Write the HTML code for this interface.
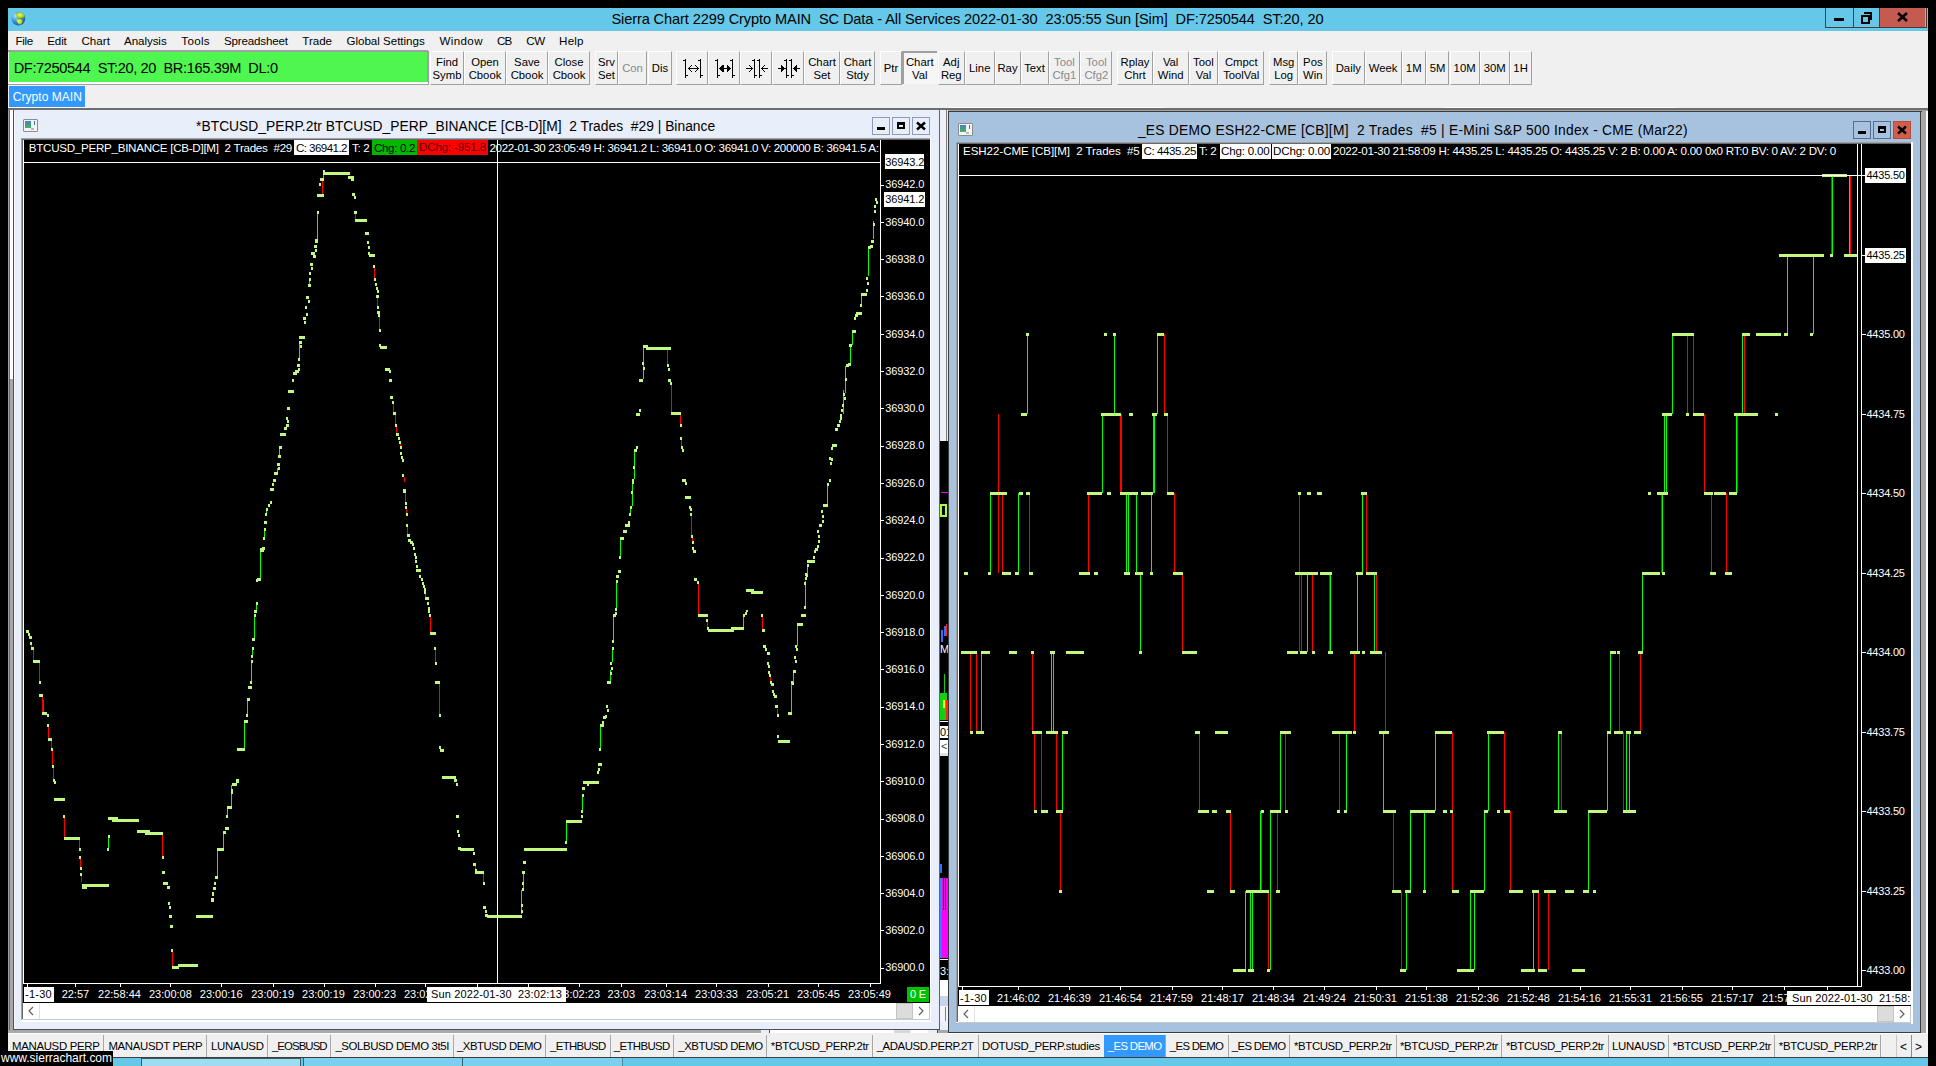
<!DOCTYPE html><html><head><meta charset="utf-8"><style>
html,body{margin:0;padding:0;background:#000;width:1936px;height:1066px;overflow:hidden;position:relative}
body>div,body>svg{position:absolute}
.t{white-space:pre;font-family:"Liberation Sans",sans-serif}
</style></head><body>
<div style="left:8px;top:8px;width:1920px;height:23px;background:#65C8E9;"></div>
<svg style="left:11px;top:11px" width="15" height="15" viewBox="0 0 15 15"><defs><radialGradient id="oc" cx="0.3" cy="0.3" r="0.8"><stop offset="0" stop-color="#a8e4ff"/><stop offset="0.5" stop-color="#3a8ee0"/><stop offset="1" stop-color="#1a4fa0"/></radialGradient><radialGradient id="gl" cx="0.45" cy="0.4" r="0.6"><stop offset="0" stop-color="#e4ff70"/><stop offset="0.7" stop-color="#a8d020"/><stop offset="1" stop-color="#6a9a10"/></radialGradient></defs><circle cx="7.4" cy="7.6" r="6.9" fill="url(#oc)"/><path d="M5.2 2.2 Q8 0.9 10.8 1.6 Q13.6 3.5 13.9 6.8 L12.2 7.6 Q10.2 6.6 8.6 7.2 Q6.4 6.8 5.6 5.4 Q4.6 3.8 5.2 2.2Z" fill="url(#gl)"/><path d="M4.9 8.2 Q8 7.4 11.2 8.4 Q12.4 10.2 11.2 12.2 Q9.6 14.2 8.1 13.8 Q6.9 11.6 5.6 10.4Z" fill="url(#gl)"/></svg>
<div class="t" style="left:611.40px;top:12.44px;font-size:14.6px;line-height:14.6px;color:#000;letter-spacing:-0.108px;">Sierra Chart 2299 Crypto MAIN  SC Data - All Services 2022-01-30  23:05:55 Sun [Sim]  DF:7250544  ST:20, 20</div>
<div style="left:1825px;top:8px;width:100px;height:19px;border:1px solid #4a3a3a;border-top:0"></div>
<div style="left:1853px;top:8px;width:1px;height:20px;background:#4a3a3a;"></div>
<div style="left:1879px;top:8px;width:46px;height:19px;background:#C45A50;"></div>
<div style="left:1879px;top:8px;width:1px;height:20px;background:#4a3a3a;"></div>
<div style="left:1834px;top:18px;width:10px;height:3px;background:#000;"></div>
<div style="left:1861px;top:15px;width:5px;height:5px;border:2px solid #000"></div>
<div style="left:1864px;top:12px;width:6px;height:6px;border-top:2px solid #000;border-right:2px solid #000"></div>
<svg style="left:1897px;top:12px" width="11" height="10" viewBox="0 0 11 10"><path d="M1 1 L10 9 M10 1 L1 9" stroke="#000" stroke-width="2.6"/></svg>
<div style="left:8px;top:31px;width:1920px;height:20px;background:#F0F0F0;"></div>
<div class="t" style="left:15.50px;top:34.98px;font-size:11.6px;line-height:11.6px;color:#000;letter-spacing:-0.322px;">File</div>
<div class="t" style="left:47.30px;top:34.98px;font-size:11.6px;line-height:11.6px;color:#000;letter-spacing:-0.171px;">Edit</div>
<div class="t" style="left:81.40px;top:34.98px;font-size:11.6px;line-height:11.6px;color:#000;letter-spacing:0.048px;">Chart</div>
<div class="t" style="left:124.00px;top:34.98px;font-size:11.6px;line-height:11.6px;color:#000;letter-spacing:-0.071px;">Analysis</div>
<div class="t" style="left:181.30px;top:34.98px;font-size:11.6px;line-height:11.6px;color:#000;letter-spacing:0.324px;">Tools</div>
<div class="t" style="left:223.90px;top:34.98px;font-size:11.6px;line-height:11.6px;color:#000;letter-spacing:-0.159px;">Spreadsheet</div>
<div class="t" style="left:302.30px;top:34.98px;font-size:11.6px;line-height:11.6px;color:#000;letter-spacing:-0.032px;">Trade</div>
<div class="t" style="left:346.50px;top:34.98px;font-size:11.6px;line-height:11.6px;color:#000;letter-spacing:-0.029px;">Global Settings</div>
<div class="t" style="left:439.50px;top:34.98px;font-size:11.6px;line-height:11.6px;color:#000;letter-spacing:0.358px;">Window</div>
<div class="t" style="left:497.10px;top:34.98px;font-size:11.6px;line-height:11.6px;color:#000;letter-spacing:-0.855px;">CB</div>
<div class="t" style="left:526.30px;top:34.98px;font-size:11.6px;line-height:11.6px;color:#000;letter-spacing:-0.414px;">CW</div>
<div class="t" style="left:559.10px;top:34.98px;font-size:11.6px;line-height:11.6px;color:#000;letter-spacing:0.160px;">Help</div>
<div style="left:8px;top:51px;width:1920px;height:57px;background:#F0F0F0;"></div>
<div style="left:8px;top:50px;width:420px;height:1px;background:#A0A0A0;"></div>
<div style="left:8px;top:51px;width:421px;height:1px;background:#A0A0A0;"></div>
<div style="left:9px;top:52px;width:418px;height:30px;background:#4FF64F;"></div>
<div style="left:427px;top:51px;width:2px;height:33px;background:#A0A0A0;"></div>
<div style="left:9px;top:82px;width:419px;height:2px;background:#FFFFFF;"></div>
<div class="t" style="left:13.70px;top:60.54px;font-size:14.6px;line-height:14.6px;color:#000;letter-spacing:-0.366px;">DF:7250544  ST:20, 20  BR:165.39M  DL:0</div>
<div style="left:430px;top:51px;width:34px;height:34px;border-left:1px solid #FFFFFF;border-right:1px solid #A0A0A0;border-bottom:1px solid #A0A0A0;border-top:1px solid #FFFFFF;box-sizing:border-box"></div>
<div class="t" style="left:436.01px;top:57.43px;font-size:11.3px;line-height:11.3px;color:#000;">Find</div>
<div class="t" style="left:432.55px;top:69.73px;font-size:11.3px;line-height:11.3px;color:#000;">Symb</div>
<div style="left:464px;top:51px;width:42px;height:34px;border-left:1px solid #FFFFFF;border-right:1px solid #A0A0A0;border-bottom:1px solid #A0A0A0;border-top:1px solid #FFFFFF;box-sizing:border-box"></div>
<div class="t" style="left:471.18px;top:57.43px;font-size:11.3px;line-height:11.3px;color:#000;">Open</div>
<div class="t" style="left:468.67px;top:69.73px;font-size:11.3px;line-height:11.3px;color:#000;">Cbook</div>
<div style="left:506px;top:51px;width:42px;height:34px;border-left:1px solid #FFFFFF;border-right:1px solid #A0A0A0;border-bottom:1px solid #A0A0A0;border-top:1px solid #FFFFFF;box-sizing:border-box"></div>
<div class="t" style="left:514.12px;top:57.43px;font-size:11.3px;line-height:11.3px;color:#000;">Save</div>
<div class="t" style="left:510.67px;top:69.73px;font-size:11.3px;line-height:11.3px;color:#000;">Cbook</div>
<div style="left:548px;top:51px;width:42px;height:34px;border-left:1px solid #FFFFFF;border-right:1px solid #A0A0A0;border-bottom:1px solid #A0A0A0;border-top:1px solid #FFFFFF;box-sizing:border-box"></div>
<div class="t" style="left:554.55px;top:57.43px;font-size:11.3px;line-height:11.3px;color:#000;">Close</div>
<div class="t" style="left:552.67px;top:69.73px;font-size:11.3px;line-height:11.3px;color:#000;">Cbook</div>
<div style="left:595px;top:51px;width:23px;height:34px;border-left:1px solid #FFFFFF;border-right:1px solid #A0A0A0;border-bottom:1px solid #A0A0A0;border-top:1px solid #FFFFFF;box-sizing:border-box"></div>
<div class="t" style="left:598.02px;top:57.43px;font-size:11.3px;line-height:11.3px;color:#000;">Srv</div>
<div class="t" style="left:598.02px;top:69.73px;font-size:11.3px;line-height:11.3px;color:#000;">Set</div>
<div style="left:618px;top:51px;width:29px;height:34px;border-left:1px solid #FFFFFF;border-right:1px solid #A0A0A0;border-bottom:1px solid #A0A0A0;border-top:1px solid #FFFFFF;box-sizing:border-box"></div>
<div class="t" style="left:622.13px;top:63.43px;font-size:11.3px;line-height:11.3px;color:#8a8a8a;">Con</div>
<div style="left:648px;top:51px;width:24px;height:34px;border-left:1px solid #FFFFFF;border-right:1px solid #A0A0A0;border-bottom:1px solid #A0A0A0;border-top:1px solid #FFFFFF;box-sizing:border-box"></div>
<div class="t" style="left:651.84px;top:63.43px;font-size:11.3px;line-height:11.3px;color:#000;">Dis</div>
<div style="left:676px;top:51px;width:32px;height:34px;border-left:1px solid #FFFFFF;border-right:1px solid #A0A0A0;border-bottom:1px solid #A0A0A0;border-top:1px solid #FFFFFF;box-sizing:border-box"></div>
<div style="left:708px;top:51px;width:32px;height:34px;border-left:1px solid #FFFFFF;border-right:1px solid #A0A0A0;border-bottom:1px solid #A0A0A0;border-top:1px solid #FFFFFF;box-sizing:border-box"></div>
<div style="left:740px;top:51px;width:32px;height:34px;border-left:1px solid #FFFFFF;border-right:1px solid #A0A0A0;border-bottom:1px solid #A0A0A0;border-top:1px solid #FFFFFF;box-sizing:border-box"></div>
<div style="left:772px;top:51px;width:32px;height:34px;border-left:1px solid #FFFFFF;border-right:1px solid #A0A0A0;border-bottom:1px solid #A0A0A0;border-top:1px solid #FFFFFF;box-sizing:border-box"></div>
<div style="left:804px;top:51px;width:36px;height:34px;border-left:1px solid #FFFFFF;border-right:1px solid #A0A0A0;border-bottom:1px solid #A0A0A0;border-top:1px solid #FFFFFF;box-sizing:border-box"></div>
<div class="t" style="left:808.19px;top:57.43px;font-size:11.3px;line-height:11.3px;color:#000;">Chart</div>
<div class="t" style="left:813.52px;top:69.73px;font-size:11.3px;line-height:11.3px;color:#000;">Set</div>
<div style="left:840px;top:51px;width:35px;height:34px;border-left:1px solid #FFFFFF;border-right:1px solid #A0A0A0;border-bottom:1px solid #A0A0A0;border-top:1px solid #FFFFFF;box-sizing:border-box"></div>
<div class="t" style="left:843.69px;top:57.43px;font-size:11.3px;line-height:11.3px;color:#000;">Chart</div>
<div class="t" style="left:846.20px;top:69.73px;font-size:11.3px;line-height:11.3px;color:#000;">Stdy</div>
<div style="left:880px;top:51px;width:22px;height:34px;border-left:1px solid #FFFFFF;border-right:1px solid #A0A0A0;border-bottom:1px solid #A0A0A0;border-top:1px solid #FFFFFF;box-sizing:border-box"></div>
<div class="t" style="left:883.78px;top:63.43px;font-size:11.3px;line-height:11.3px;color:#000;">Ptr</div>
<div style="left:902px;top:51px;width:34.5px;height:33px;background:#F6F6F6;border-left:2px solid #A0A0A0;border-top:2px solid #A0A0A0;box-sizing:border-box"></div>
<div class="t" style="left:905.94px;top:57.43px;font-size:11.3px;line-height:11.3px;color:#000;">Chart</div>
<div class="t" style="left:912.00px;top:69.73px;font-size:11.3px;line-height:11.3px;color:#000;">Val</div>
<div style="left:937.5px;top:51px;width:27.5px;height:34px;border-left:1px solid #FFFFFF;border-right:1px solid #A0A0A0;border-bottom:1px solid #A0A0A0;border-top:1px solid #FFFFFF;box-sizing:border-box"></div>
<div class="t" style="left:943.09px;top:57.43px;font-size:11.3px;line-height:11.3px;color:#000;">Adj</div>
<div class="t" style="left:940.88px;top:69.73px;font-size:11.3px;line-height:11.3px;color:#000;">Reg</div>
<div style="left:965px;top:51px;width:29.5px;height:34px;border-left:1px solid #FFFFFF;border-right:1px solid #A0A0A0;border-bottom:1px solid #A0A0A0;border-top:1px solid #FFFFFF;box-sizing:border-box"></div>
<div class="t" style="left:969.07px;top:63.43px;font-size:11.3px;line-height:11.3px;color:#000;">Line</div>
<div style="left:994.5px;top:51px;width:26.0px;height:34px;border-left:1px solid #FFFFFF;border-right:1px solid #A0A0A0;border-bottom:1px solid #A0A0A0;border-top:1px solid #FFFFFF;box-sizing:border-box"></div>
<div class="t" style="left:997.45px;top:63.43px;font-size:11.3px;line-height:11.3px;color:#000;">Ray</div>
<div style="left:1020.5px;top:51px;width:28.0px;height:34px;border-left:1px solid #FFFFFF;border-right:1px solid #A0A0A0;border-bottom:1px solid #A0A0A0;border-top:1px solid #FFFFFF;box-sizing:border-box"></div>
<div class="t" style="left:1024.14px;top:63.43px;font-size:11.3px;line-height:11.3px;color:#000;">Text</div>
<div style="left:1048.5px;top:51px;width:31.799999999999955px;height:34px;border-left:1px solid #FFFFFF;border-right:1px solid #A0A0A0;border-bottom:1px solid #A0A0A0;border-top:1px solid #FFFFFF;box-sizing:border-box"></div>
<div class="t" style="left:1054.03px;top:57.43px;font-size:11.3px;line-height:11.3px;color:#8a8a8a;">Tool</div>
<div class="t" style="left:1052.46px;top:69.73px;font-size:11.3px;line-height:11.3px;color:#8a8a8a;">Cfg1</div>
<div style="left:1080.3px;top:51px;width:32.100000000000136px;height:34px;border-left:1px solid #FFFFFF;border-right:1px solid #A0A0A0;border-bottom:1px solid #A0A0A0;border-top:1px solid #FFFFFF;box-sizing:border-box"></div>
<div class="t" style="left:1085.98px;top:57.43px;font-size:11.3px;line-height:11.3px;color:#8a8a8a;">Tool</div>
<div class="t" style="left:1084.41px;top:69.73px;font-size:11.3px;line-height:11.3px;color:#8a8a8a;">Cfg2</div>
<div style="left:1117.3px;top:51px;width:35.40000000000009px;height:34px;border-left:1px solid #FFFFFF;border-right:1px solid #A0A0A0;border-bottom:1px solid #A0A0A0;border-top:1px solid #FFFFFF;box-sizing:border-box"></div>
<div class="t" style="left:1120.55px;top:57.43px;font-size:11.3px;line-height:11.3px;color:#000;">Rplay</div>
<div class="t" style="left:1124.33px;top:69.73px;font-size:11.3px;line-height:11.3px;color:#000;">Chrt</div>
<div style="left:1152.7px;top:51px;width:35.899999999999864px;height:34px;border-left:1px solid #FFFFFF;border-right:1px solid #A0A0A0;border-bottom:1px solid #A0A0A0;border-top:1px solid #FFFFFF;box-sizing:border-box"></div>
<div class="t" style="left:1162.90px;top:57.43px;font-size:11.3px;line-height:11.3px;color:#000;">Val</div>
<div class="t" style="left:1157.78px;top:69.73px;font-size:11.3px;line-height:11.3px;color:#000;">Wind</div>
<div style="left:1188.6px;top:51px;width:29.700000000000045px;height:34px;border-left:1px solid #FFFFFF;border-right:1px solid #A0A0A0;border-bottom:1px solid #A0A0A0;border-top:1px solid #FFFFFF;box-sizing:border-box"></div>
<div class="t" style="left:1193.08px;top:57.43px;font-size:11.3px;line-height:11.3px;color:#000;">Tool</div>
<div class="t" style="left:1195.70px;top:69.73px;font-size:11.3px;line-height:11.3px;color:#000;">Val</div>
<div style="left:1218.3px;top:51px;width:45.90000000000009px;height:34px;border-left:1px solid #FFFFFF;border-right:1px solid #A0A0A0;border-bottom:1px solid #A0A0A0;border-top:1px solid #FFFFFF;box-sizing:border-box"></div>
<div class="t" style="left:1224.93px;top:57.43px;font-size:11.3px;line-height:11.3px;color:#000;">Cmpct</div>
<div class="t" style="left:1223.14px;top:69.73px;font-size:11.3px;line-height:11.3px;color:#000;">ToolVal</div>
<div style="left:1269.1px;top:51px;width:29.200000000000045px;height:34px;border-left:1px solid #FFFFFF;border-right:1px solid #A0A0A0;border-bottom:1px solid #A0A0A0;border-top:1px solid #FFFFFF;box-sizing:border-box"></div>
<div class="t" style="left:1273.03px;top:57.43px;font-size:11.3px;line-height:11.3px;color:#000;">Msg</div>
<div class="t" style="left:1274.27px;top:69.73px;font-size:11.3px;line-height:11.3px;color:#000;">Log</div>
<div style="left:1298.3px;top:51px;width:29.100000000000136px;height:34px;border-left:1px solid #FFFFFF;border-right:1px solid #A0A0A0;border-bottom:1px solid #A0A0A0;border-top:1px solid #FFFFFF;box-sizing:border-box"></div>
<div class="t" style="left:1303.12px;top:57.43px;font-size:11.3px;line-height:11.3px;color:#000;">Pos</div>
<div class="t" style="left:1303.12px;top:69.73px;font-size:11.3px;line-height:11.3px;color:#000;">Win</div>
<div style="left:1332px;top:51px;width:32.5px;height:34px;border-left:1px solid #FFFFFF;border-right:1px solid #A0A0A0;border-bottom:1px solid #A0A0A0;border-top:1px solid #FFFFFF;box-sizing:border-box"></div>
<div class="t" style="left:1335.70px;top:63.43px;font-size:11.3px;line-height:11.3px;color:#000;">Daily</div>
<div style="left:1364.5px;top:51px;width:37.299999999999955px;height:34px;border-left:1px solid #FFFFFF;border-right:1px solid #A0A0A0;border-bottom:1px solid #A0A0A0;border-top:1px solid #FFFFFF;box-sizing:border-box"></div>
<div class="t" style="left:1368.81px;top:63.43px;font-size:11.3px;line-height:11.3px;color:#000;">Week</div>
<div style="left:1401.8px;top:51px;width:23.799999999999955px;height:34px;border-left:1px solid #FFFFFF;border-right:1px solid #A0A0A0;border-bottom:1px solid #A0A0A0;border-top:1px solid #FFFFFF;box-sizing:border-box"></div>
<div class="t" style="left:1405.85px;top:63.43px;font-size:11.3px;line-height:11.3px;color:#000;">1M</div>
<div style="left:1425.6px;top:51px;width:23.90000000000009px;height:34px;border-left:1px solid #FFFFFF;border-right:1px solid #A0A0A0;border-bottom:1px solid #A0A0A0;border-top:1px solid #FFFFFF;box-sizing:border-box"></div>
<div class="t" style="left:1429.70px;top:63.43px;font-size:11.3px;line-height:11.3px;color:#000;">5M</div>
<div style="left:1449.5px;top:51px;width:30.200000000000045px;height:34px;border-left:1px solid #FFFFFF;border-right:1px solid #A0A0A0;border-bottom:1px solid #A0A0A0;border-top:1px solid #FFFFFF;box-sizing:border-box"></div>
<div class="t" style="left:1453.61px;top:63.43px;font-size:11.3px;line-height:11.3px;color:#000;">10M</div>
<div style="left:1479.7px;top:51px;width:29.899999999999864px;height:34px;border-left:1px solid #FFFFFF;border-right:1px solid #A0A0A0;border-bottom:1px solid #A0A0A0;border-top:1px solid #FFFFFF;box-sizing:border-box"></div>
<div class="t" style="left:1483.66px;top:63.43px;font-size:11.3px;line-height:11.3px;color:#000;">30M</div>
<div style="left:1509.6px;top:51px;width:22.0px;height:34px;border-left:1px solid #FFFFFF;border-right:1px solid #A0A0A0;border-bottom:1px solid #A0A0A0;border-top:1px solid #FFFFFF;box-sizing:border-box"></div>
<div class="t" style="left:1513.37px;top:63.43px;font-size:11.3px;line-height:11.3px;color:#000;">1H</div>
<svg style="left:670px;top:55px" width="140" height="26" viewBox="670 55 140 26" shape-rendering="crispEdges"><g fill="#000"><rect x="685" y="59" width="1" height="19"/><rect x="683" y="60" width="2" height="1"/><rect x="686" y="75" width="2" height="1"/><rect x="700" y="59" width="1" height="19"/><rect x="698" y="60" width="2" height="1"/><rect x="701" y="75" width="2" height="1"/><rect x="688" y="68" width="11" height="1"/><rect x="689" y="67" width="1" height="1"/><rect x="689" y="69" width="1" height="1"/><rect x="690" y="66" width="1" height="1"/><rect x="690" y="70" width="1" height="1"/><rect x="691" y="65" width="1" height="1"/><rect x="691" y="71" width="1" height="1"/><rect x="697" y="67" width="1" height="1"/><rect x="697" y="69" width="1" height="1"/><rect x="696" y="66" width="1" height="1"/><rect x="696" y="70" width="1" height="1"/><rect x="695" y="65" width="1" height="1"/><rect x="695" y="71" width="1" height="1"/><rect x="717" y="59" width="1" height="19"/><rect x="715" y="60" width="2" height="1"/><rect x="718" y="75" width="2" height="1"/><rect x="732" y="59" width="1" height="19"/><rect x="730" y="60" width="2" height="1"/><rect x="733" y="75" width="2" height="1"/><rect x="723" y="68" width="4" height="1"/><polygon points="719,68.5 723.5,64.5 723.5,72.5"/><polygon points="731,68.5 726.5,64.5 726.5,72.5"/><rect x="754" y="59" width="1" height="19"/><rect x="752" y="60" width="2" height="1"/><rect x="755" y="75" width="2" height="1"/><rect x="759" y="59" width="1" height="19"/><rect x="757" y="60" width="2" height="1"/><rect x="760" y="75" width="2" height="1"/><rect x="746" y="68" width="7" height="1"/><rect x="751" y="67" width="1" height="1"/><rect x="751" y="69" width="1" height="1"/><rect x="750" y="66" width="1" height="1"/><rect x="750" y="70" width="1" height="1"/><rect x="749" y="65" width="1" height="1"/><rect x="749" y="71" width="1" height="1"/><rect x="761" y="68" width="7" height="1"/><rect x="762" y="67" width="1" height="1"/><rect x="762" y="69" width="1" height="1"/><rect x="763" y="66" width="1" height="1"/><rect x="763" y="70" width="1" height="1"/><rect x="764" y="65" width="1" height="1"/><rect x="764" y="71" width="1" height="1"/><rect x="786" y="59" width="1" height="19"/><rect x="784" y="60" width="2" height="1"/><rect x="787" y="75" width="2" height="1"/><rect x="791" y="59" width="1" height="19"/><rect x="789" y="60" width="2" height="1"/><rect x="792" y="75" width="2" height="1"/><rect x="778" y="68" width="4" height="1"/><polygon points="785.5,68.5 781,64.5 781,72.5"/><polygon points="792.5,68.5 797,64.5 797,72.5"/><rect x="797" y="68" width="3" height="1"/></g></svg>
<div style="left:8px;top:84px;width:421px;height:1px;background:#A0A0A0;"></div>
<div style="left:9px;top:86px;width:76px;height:21px;background:#3399FF;"></div>
<div class="t" style="left:12.70px;top:90.64px;font-size:12px;line-height:12px;color:#FFFFFF;letter-spacing:0.056px;">Crypto MAIN</div>
<div style="left:8px;top:107px;width:1920px;height:1px;background:#F0F0F0;"></div>
<div style="left:8px;top:107px;width:78px;height:1px;background:#FFFFFF;"></div>
<div style="left:949px;top:107px;width:216px;height:1px;background:#FFFFFF;"></div>
<div style="left:1443px;top:107px;width:234px;height:1px;background:#FFFFFF;"></div>
<div style="left:8px;top:108px;width:1920px;height:2px;background:#6E6E6E;"></div>
<div style="left:8px;top:110px;width:1920px;height:923px;background:#F0F0F0;"></div>
<div style="left:8px;top:110px;width:1px;height:923px;background:#A0A0A0;"></div>
<div style="left:9px;top:110px;width:1px;height:923px;background:#6A6A6A;"></div>
<div style="left:10px;top:110px;width:3px;height:269px;background:#FFFFFF;"></div>
<div style="left:10px;top:379px;width:3px;height:654px;background:#A8A8A8;"></div>
<div style="left:1921px;top:110px;width:5px;height:923px;background:#A8A8A8;"></div>
<div style="left:1926px;top:110px;width:2px;height:923px;background:#FFFFFF;"></div>
<div style="left:13px;top:110px;width:927px;height:920px;background:#E9EEFB;"></div>
<div style="left:13px;top:110px;width:1px;height:920px;background:#505050;"></div>
<div style="left:14px;top:111px;width:1px;height:918px;background:#F6F9FF;"></div>
<div style="left:939px;top:110px;width:1px;height:920px;background:#646464;"></div>
<div style="left:13px;top:1029px;width:927px;height:1px;background:#505050;"></div>
<div style="left:23px;top:119px;width:13px;height:11px;background:#F4F4F4;border:1px solid #8C8C8C;border-radius:1px"></div>
<div style="left:25px;top:121px;width:6px;height:7px;background:linear-gradient(#4a80c0,#48b060)"></div>
<div style="left:34px;top:121px;width:1px;height:4px;background:#2a7ad0;"></div>
<div style="left:31px;top:128px;width:3px;height:2px;background:#b8b8b8;"></div>
<div class="t" style="left:196.10px;top:119.82px;font-size:13.8px;line-height:13.8px;color:#000;letter-spacing:0.017px;">*BTCUSD_PERP.2tr BTCUSD_PERP_BINANCE [CB-D][M]  2 Trades  #29 | Binance</div>
<div style="left:872px;top:117px;width:18px;height:18px;background:#E9EEFB;border:1px solid #8C9BB8;box-sizing:border-box"></div>
<div style="left:877px;top:127px;width:8px;height:3px;background:#000;"></div>
<div style="left:892px;top:117px;width:18px;height:18px;background:#E9EEFB;border:1px solid #8C9BB8;box-sizing:border-box"></div>
<div style="left:897px;top:122px;width:8px;height:7px;border:2px solid #000;border-top-width:3px;box-sizing:border-box"></div>
<div style="left:912px;top:117px;width:18px;height:18px;background:#E9EEFB;border:1px solid #8C9BB8;box-sizing:border-box"></div>
<svg style="left:916px;top:121px" width="10" height="10" viewBox="0 0 10 10"><path d="M1 1.5 L9 8.5 M9 1.5 L1 8.5" stroke="#000" stroke-width="2.4"/></svg>
<div style="left:21px;top:138px;width:910px;height:1px;background:#A0A0A0;"></div>
<div style="left:21px;top:138px;width:1px;height:882px;background:#A0A0A0;"></div>
<div style="left:22px;top:139px;width:909px;height:1px;background:#696969;"></div>
<div style="left:22px;top:139px;width:1px;height:880px;background:#696969;"></div>
<div style="left:23px;top:140px;width:907px;height:863px;background:#000;"></div>
<div style="left:930px;top:138px;width:1px;height:884px;background:#FFFFFF;"></div>
<div style="left:21px;top:1020px;width:910px;height:2px;background:#FFFFFF;"></div>
<div style="left:940px;top:110px;width:988px;height:1px;background:#A0A0A0;"></div>
<div style="left:948px;top:111px;width:973px;height:922px;background:#A7C2DF;"></div>
<div style="left:948px;top:111px;width:974px;height:1px;background:#3C3C3C;"></div>
<div style="left:948px;top:111px;width:1px;height:922px;background:#3C3C3C;"></div>
<div style="left:1920px;top:111px;width:1px;height:922px;background:#3C3C3C;"></div>
<div style="left:948px;top:1032px;width:973px;height:1px;background:#3C3C3C;"></div>
<div style="left:958px;top:123px;width:13px;height:11px;background:#F4F4F4;border:1px solid #8C8C8C;border-radius:1px"></div>
<div style="left:960px;top:125px;width:6px;height:7px;background:linear-gradient(#4a80c0,#48b060)"></div>
<div style="left:969px;top:125px;width:1px;height:4px;background:#2a7ad0;"></div>
<div style="left:966px;top:132px;width:3px;height:2px;background:#b8b8b8;"></div>
<div class="t" style="left:1137.90px;top:124.12px;font-size:13.8px;line-height:13.8px;color:#000;letter-spacing:0.268px;">_ES DEMO ESH22-CME [CB][M]  2 Trades  #5 | E-Mini S&amp;P 500 Index - CME (Mar22)</div>
<div style="left:1853px;top:121px;width:18px;height:18px;background:#A7C2DF;border:1px solid #5C6C88;box-sizing:border-box"></div>
<div style="left:1858px;top:131px;width:8px;height:3px;background:#000;"></div>
<div style="left:1873px;top:121px;width:18px;height:18px;background:#A7C2DF;border:1px solid #5C6C88;box-sizing:border-box"></div>
<div style="left:1878px;top:126px;width:8px;height:7px;border:2px solid #000;border-top-width:3px;box-sizing:border-box"></div>
<div style="left:1893px;top:121px;width:18px;height:18px;background:#D0604C;border:1px solid #B84A38;box-sizing:border-box"></div>
<svg style="left:1897px;top:125px" width="10" height="10" viewBox="0 0 10 10"><path d="M1 1.5 L9 8.5 M9 1.5 L1 8.5" stroke="#000" stroke-width="2.4"/></svg>
<div style="left:956px;top:142px;width:957px;height:1px;background:#A0A0A0;"></div>
<div style="left:956px;top:142px;width:1px;height:882px;background:#A0A0A0;"></div>
<div style="left:957px;top:143px;width:956px;height:1px;background:#696969;"></div>
<div style="left:957px;top:143px;width:1px;height:880px;background:#696969;"></div>
<div style="left:958px;top:144px;width:953px;height:862px;background:#000;"></div>
<div style="left:1911px;top:142px;width:2px;height:882px;background:#FFFFFF;"></div>
<div style="left:956px;top:1022px;width:957px;height:1px;background:#FFFFFF;"></div>
<div style="left:940px;top:110px;width:8px;height:920px;background:#E9EEFB;"></div>
<div style="left:8px;top:1030px;width:940px;height:28px;background:#F0F0F0;"></div>
<div style="left:948px;top:1033px;width:980px;height:25px;background:#F0F0F0;"></div>
<div style="left:8px;top:1030px;width:753px;height:3px;background:#A8A8A8;"></div>
<div style="left:761px;top:1030px;width:8px;height:3px;background:#E9EEFB;"></div>
<div style="left:769px;top:1030px;width:1px;height:3px;background:#505050;"></div>
<div style="left:770px;top:1030px;width:124px;height:3px;background:#FFFFFF;"></div>
<div style="left:894px;top:1030px;width:16px;height:3px;background:#D8D8D8;"></div>
<div style="left:911px;top:1030px;width:17px;height:3px;background:#FFFFFF;"></div>
<div style="left:928px;top:1030px;width:9px;height:3px;background:#E9EEFB;"></div>
<div style="left:937px;top:1030px;width:1px;height:3px;background:#505050;"></div>
<div style="left:938px;top:1030px;width:10px;height:3px;background:#A8A8A8;"></div>
<div style="left:8px;top:1057px;width:1920px;height:1px;background:#3C3C3C;"></div>
<div style="left:0px;top:1058px;width:1928px;height:8px;background:#65C8E9;"></div>
<div class="t" style="left:28.80px;top:141.78px;font-size:11.6px;line-height:11.6px;color:#FFFFFF;letter-spacing:-0.271px;">BTCUSD_PERP_BINANCE [CB-D][M]  2 Trades  #29</div>
<div style="left:294px;top:140px;width:55px;height:15px;background:#FFFFFF;"></div>
<div class="t" style="left:296.00px;top:141.78px;font-size:11.6px;line-height:11.6px;color:#000;letter-spacing:-0.573px;">C: 36941.2</div>
<div class="t" style="left:352.00px;top:141.78px;font-size:11.6px;line-height:11.6px;color:#FFFFFF;letter-spacing:-0.347px;">T: 2</div>
<div style="left:372px;top:140px;width:45px;height:15px;background:#00B800;"></div>
<div class="t" style="left:374.00px;top:141.78px;font-size:11.6px;line-height:11.6px;color:#000;letter-spacing:-0.354px;">Chg: 0.2</div>
<div style="left:417px;top:140px;width:71px;height:15px;background:#FF0000;"></div>
<div class="t" style="left:419.00px;top:141.48px;font-size:11.6px;line-height:11.6px;color:#5A0000;letter-spacing:-0.164px;">DChg: -951.8</div>
<div class="t" style="left:489.50px;top:141.78px;font-size:11.6px;line-height:11.6px;color:#FFFFFF;letter-spacing:-0.338px;">2022-01-30 23:05:49 H: 36941.2 L: 36941.0 O: 36941.0 V: 200000 B: 36941.5 A:</div>
<div style="left:879px;top:140px;width:51px;height:7px;background:#000;"></div>
<div style="left:24px;top:162px;width:856px;height:1px;background:#FFFFFF;"></div>
<div style="left:880px;top:140px;width:1px;height:844px;background:#FFFFFF;"></div>
<div style="left:23px;top:983px;width:858px;height:1px;background:#FFFFFF;"></div>
<div style="left:23px;top:140px;width:1px;height:844px;background:#FFFFFF;"></div>
<div style="left:497px;top:140px;width:1px;height:844px;background:#FFFFFF;"></div>
<div style="left:880px;top:185px;width:4px;height:1px;background:#FFFFFF;"></div>
<div class="t" style="left:885.20px;top:179.39px;font-size:11px;line-height:11px;color:#FFFFFF;letter-spacing:-0.109px;">36942.0</div>
<div style="left:880px;top:222px;width:4px;height:1px;background:#FFFFFF;"></div>
<div class="t" style="left:885.20px;top:216.68px;font-size:11px;line-height:11px;color:#FFFFFF;letter-spacing:-0.109px;">36940.0</div>
<div style="left:880px;top:259px;width:4px;height:1px;background:#FFFFFF;"></div>
<div class="t" style="left:885.20px;top:253.97px;font-size:11px;line-height:11px;color:#FFFFFF;letter-spacing:-0.109px;">36938.0</div>
<div style="left:880px;top:296px;width:4px;height:1px;background:#FFFFFF;"></div>
<div class="t" style="left:885.20px;top:291.26px;font-size:11px;line-height:11px;color:#FFFFFF;letter-spacing:-0.109px;">36936.0</div>
<div style="left:880px;top:334px;width:4px;height:1px;background:#FFFFFF;"></div>
<div class="t" style="left:885.20px;top:328.55px;font-size:11px;line-height:11px;color:#FFFFFF;letter-spacing:-0.109px;">36934.0</div>
<div style="left:880px;top:371px;width:4px;height:1px;background:#FFFFFF;"></div>
<div class="t" style="left:885.20px;top:365.84px;font-size:11px;line-height:11px;color:#FFFFFF;letter-spacing:-0.109px;">36932.0</div>
<div style="left:880px;top:408px;width:4px;height:1px;background:#FFFFFF;"></div>
<div class="t" style="left:885.20px;top:403.13px;font-size:11px;line-height:11px;color:#FFFFFF;letter-spacing:-0.109px;">36930.0</div>
<div style="left:880px;top:446px;width:4px;height:1px;background:#FFFFFF;"></div>
<div class="t" style="left:885.20px;top:440.42px;font-size:11px;line-height:11px;color:#FFFFFF;letter-spacing:-0.109px;">36928.0</div>
<div style="left:880px;top:483px;width:4px;height:1px;background:#FFFFFF;"></div>
<div class="t" style="left:885.20px;top:477.71px;font-size:11px;line-height:11px;color:#FFFFFF;letter-spacing:-0.109px;">36926.0</div>
<div style="left:880px;top:520px;width:4px;height:1px;background:#FFFFFF;"></div>
<div class="t" style="left:885.20px;top:515.00px;font-size:11px;line-height:11px;color:#FFFFFF;letter-spacing:-0.109px;">36924.0</div>
<div style="left:880px;top:558px;width:4px;height:1px;background:#FFFFFF;"></div>
<div class="t" style="left:885.20px;top:552.29px;font-size:11px;line-height:11px;color:#FFFFFF;letter-spacing:-0.109px;">36922.0</div>
<div style="left:880px;top:595px;width:4px;height:1px;background:#FFFFFF;"></div>
<div class="t" style="left:885.20px;top:589.58px;font-size:11px;line-height:11px;color:#FFFFFF;letter-spacing:-0.109px;">36920.0</div>
<div style="left:880px;top:632px;width:4px;height:1px;background:#FFFFFF;"></div>
<div class="t" style="left:885.20px;top:626.87px;font-size:11px;line-height:11px;color:#FFFFFF;letter-spacing:-0.109px;">36918.0</div>
<div style="left:880px;top:669px;width:4px;height:1px;background:#FFFFFF;"></div>
<div class="t" style="left:885.20px;top:664.16px;font-size:11px;line-height:11px;color:#FFFFFF;letter-spacing:-0.109px;">36916.0</div>
<div style="left:880px;top:707px;width:4px;height:1px;background:#FFFFFF;"></div>
<div class="t" style="left:885.20px;top:701.45px;font-size:11px;line-height:11px;color:#FFFFFF;letter-spacing:-0.109px;">36914.0</div>
<div style="left:880px;top:744px;width:4px;height:1px;background:#FFFFFF;"></div>
<div class="t" style="left:885.20px;top:738.74px;font-size:11px;line-height:11px;color:#FFFFFF;letter-spacing:-0.109px;">36912.0</div>
<div style="left:880px;top:781px;width:4px;height:1px;background:#FFFFFF;"></div>
<div class="t" style="left:885.20px;top:776.03px;font-size:11px;line-height:11px;color:#FFFFFF;letter-spacing:-0.109px;">36910.0</div>
<div style="left:880px;top:819px;width:4px;height:1px;background:#FFFFFF;"></div>
<div class="t" style="left:885.20px;top:813.32px;font-size:11px;line-height:11px;color:#FFFFFF;letter-spacing:-0.109px;">36908.0</div>
<div style="left:880px;top:856px;width:4px;height:1px;background:#FFFFFF;"></div>
<div class="t" style="left:885.20px;top:850.61px;font-size:11px;line-height:11px;color:#FFFFFF;letter-spacing:-0.109px;">36906.0</div>
<div style="left:880px;top:893px;width:4px;height:1px;background:#FFFFFF;"></div>
<div class="t" style="left:885.20px;top:887.90px;font-size:11px;line-height:11px;color:#FFFFFF;letter-spacing:-0.109px;">36904.0</div>
<div style="left:880px;top:930px;width:4px;height:1px;background:#FFFFFF;"></div>
<div class="t" style="left:885.20px;top:925.19px;font-size:11px;line-height:11px;color:#FFFFFF;letter-spacing:-0.109px;">36902.0</div>
<div style="left:880px;top:968px;width:4px;height:1px;background:#FFFFFF;"></div>
<div class="t" style="left:885.20px;top:962.48px;font-size:11px;line-height:11px;color:#FFFFFF;letter-spacing:-0.109px;">36900.0</div>
<div style="left:885px;top:154px;width:39px;height:15px;background:#FFFFFF;"></div>
<div class="t" style="left:885.20px;top:157.01px;font-size:11px;line-height:11px;color:#000;letter-spacing:-0.109px;">36943.2</div>
<div style="left:884px;top:192px;width:41px;height:15px;background:#FFFFFF;"></div>
<div class="t" style="left:885.20px;top:194.30px;font-size:11px;line-height:11px;color:#000;letter-spacing:-0.109px;">36941.2</div>
<div style="left:27px;top:984px;width:1px;height:3px;background:#FFFFFF;"></div>
<div style="left:75px;top:984px;width:1px;height:3px;background:#FFFFFF;"></div>
<div style="left:120px;top:984px;width:1px;height:3px;background:#FFFFFF;"></div>
<div style="left:170px;top:984px;width:1px;height:3px;background:#FFFFFF;"></div>
<div style="left:221px;top:984px;width:1px;height:3px;background:#FFFFFF;"></div>
<div style="left:273px;top:984px;width:1px;height:3px;background:#FFFFFF;"></div>
<div style="left:324px;top:984px;width:1px;height:3px;background:#FFFFFF;"></div>
<div style="left:375px;top:984px;width:1px;height:3px;background:#FFFFFF;"></div>
<div style="left:425px;top:984px;width:1px;height:3px;background:#FFFFFF;"></div>
<div style="left:477px;top:984px;width:1px;height:3px;background:#FFFFFF;"></div>
<div style="left:528px;top:984px;width:1px;height:3px;background:#FFFFFF;"></div>
<div style="left:579px;top:984px;width:1px;height:3px;background:#FFFFFF;"></div>
<div style="left:621px;top:984px;width:1px;height:3px;background:#FFFFFF;"></div>
<div style="left:666px;top:984px;width:1px;height:3px;background:#FFFFFF;"></div>
<div style="left:716px;top:984px;width:1px;height:3px;background:#FFFFFF;"></div>
<div style="left:768px;top:984px;width:1px;height:3px;background:#FFFFFF;"></div>
<div style="left:818px;top:984px;width:1px;height:3px;background:#FFFFFF;"></div>
<div style="left:870px;top:984px;width:1px;height:3px;background:#FFFFFF;"></div>
<div class="t" style="left:61.63px;top:989.19px;font-size:11px;line-height:11px;color:#FFFFFF;">22:57</div>
<div class="t" style="left:98.09px;top:989.19px;font-size:11px;line-height:11px;color:#FFFFFF;">22:58:44</div>
<div class="t" style="left:148.99px;top:989.19px;font-size:11px;line-height:11px;color:#FFFFFF;">23:00:08</div>
<div class="t" style="left:199.79px;top:989.19px;font-size:11px;line-height:11px;color:#FFFFFF;">23:00:16</div>
<div class="t" style="left:251.19px;top:989.19px;font-size:11px;line-height:11px;color:#FFFFFF;">23:00:19</div>
<div class="t" style="left:302.09px;top:989.19px;font-size:11px;line-height:11px;color:#FFFFFF;">23:00:19</div>
<div class="t" style="left:353.19px;top:989.19px;font-size:11px;line-height:11px;color:#FFFFFF;">23:00:23</div>
<div class="t" style="left:403.99px;top:989.19px;font-size:11px;line-height:11px;color:#FFFFFF;">23:02:03</div>
<div class="t" style="left:557.19px;top:989.19px;font-size:11px;line-height:11px;color:#FFFFFF;">23:02:23</div>
<div class="t" style="left:607.53px;top:989.19px;font-size:11px;line-height:11px;color:#FFFFFF;">23:03</div>
<div class="t" style="left:644.19px;top:989.19px;font-size:11px;line-height:11px;color:#FFFFFF;">23:03:14</div>
<div class="t" style="left:695.09px;top:989.19px;font-size:11px;line-height:11px;color:#FFFFFF;">23:03:33</div>
<div class="t" style="left:746.19px;top:989.19px;font-size:11px;line-height:11px;color:#FFFFFF;">23:05:21</div>
<div class="t" style="left:796.99px;top:989.19px;font-size:11px;line-height:11px;color:#FFFFFF;">23:05:45</div>
<div class="t" style="left:848.09px;top:989.19px;font-size:11px;line-height:11px;color:#FFFFFF;">23:05:49</div>
<div style="left:24px;top:987px;width:30px;height:15px;background:#FFFFFF;"></div>
<div class="t" style="left:25.00px;top:989.19px;font-size:11px;line-height:11px;color:#000;letter-spacing:0.263px;">-1-30</div>
<div style="left:427px;top:987px;width:139px;height:15px;background:#FFFFFF;"></div>
<div class="t" style="left:431.00px;top:989.19px;font-size:11px;line-height:11px;color:#000;letter-spacing:0.132px;">Sun 2022-01-30  23:02:13</div>
<div style="left:907px;top:987px;width:22px;height:15px;background:#00C000;"></div>
<div class="t" style="left:910.00px;top:989.19px;font-size:11px;line-height:11px;color:#FFFFFF;letter-spacing:-0.172px;">0 E</div>
<div style="left:23px;top:1003px;width:907px;height:16px;background:#FFFFFF;"></div>
<div style="left:23px;top:1019px;width:907px;height:1px;background:#C8C8C8;"></div>
<div style="left:39px;top:1003px;width:1px;height:16px;background:#E0E0E0;"></div>
<div style="left:896px;top:1003px;width:17px;height:16px;background:#DCDCDC;box-sizing:border-box;border:1px solid #C4C4C4"></div>
<div style="left:929px;top:1003px;width:1px;height:17px;background:#C8C8C8;"></div>
<svg style="left:27px;top:1006px" width="8" height="10" viewBox="0 0 8 10"><path d="M6 1 L2 5 L6 9" stroke="#606060" stroke-width="1.2" fill="none"/></svg>
<svg style="left:917px;top:1006px" width="8" height="10" viewBox="0 0 8 10"><path d="M2 1 L6 5 L2 9" stroke="#606060" stroke-width="1.2" fill="none"/></svg>
<svg style="left:24px;top:163px" width="856" height="820" viewBox="24 163 856 820" shape-rendering="crispEdges"><rect x="31" y="645" width="1" height="3" fill="#FF0000"/><rect x="33" y="650" width="1" height="10" fill="#FF0000"/><rect x="39" y="663" width="1" height="18" fill="#FF0000"/><rect x="42" y="697" width="1" height="15" fill="#FF0000"/><rect x="43" y="700" width="1" height="12" fill="#FF0000"/><rect x="48" y="727" width="1" height="12" fill="#FF0000"/><rect x="51" y="741" width="1" height="8" fill="#FF0000"/><rect x="52" y="751" width="1" height="15" fill="#FF0000"/><rect x="53" y="768" width="1" height="12" fill="#FF0000"/><rect x="64" y="818" width="1" height="20" fill="#FF0000"/><rect x="79" y="840" width="1" height="8" fill="#FF0000"/><rect x="80" y="858" width="1" height="9" fill="#FF0000"/><rect x="81" y="876" width="1" height="6" fill="#FF0000"/><rect x="108" y="837" width="1" height="12" fill="#00FF00"/><rect x="162" y="835" width="1" height="21" fill="#FF0000"/><rect x="172" y="952" width="1" height="14" fill="#FF0000"/><rect x="217" y="850" width="1" height="26" fill="#00FF00"/><rect x="223" y="831" width="1" height="17" fill="#00FF00"/><rect x="227" y="807" width="1" height="9" fill="#00FF00"/><rect x="231" y="785" width="1" height="21" fill="#00FF00"/><rect x="244" y="723" width="1" height="25" fill="#00FF00"/><rect x="247" y="700" width="1" height="14" fill="#00FF00"/><rect x="251" y="662" width="1" height="19" fill="#00FF00"/><rect x="252" y="650" width="1" height="5" fill="#00FF00"/><rect x="254" y="615" width="1" height="23" fill="#00FF00"/><rect x="256" y="604" width="1" height="6" fill="#00FF00"/><rect x="260" y="551" width="1" height="27" fill="#00FF00"/><rect x="264" y="530" width="1" height="7" fill="#00FF00"/><rect x="266" y="509" width="1" height="4" fill="#00FF00"/><rect x="277" y="468" width="1" height="4" fill="#00FF00"/><rect x="279" y="449" width="1" height="6" fill="#00FF00"/><rect x="299" y="343" width="1" height="16" fill="#00FF00"/><rect x="309" y="278" width="1" height="6" fill="#00FF00"/><rect x="317" y="212" width="1" height="27" fill="#00FF00"/><rect x="322" y="181" width="1" height="13" fill="#FF0000"/><rect x="323" y="171" width="1" height="7" fill="#00FF00"/><rect x="355" y="214" width="1" height="6" fill="#FF0000"/><rect x="374" y="268" width="1" height="11" fill="#FF0000"/><rect x="377" y="298" width="1" height="9" fill="#FF0000"/><rect x="379" y="315" width="1" height="14" fill="#FF0000"/><rect x="393" y="404" width="1" height="8" fill="#FF0000"/><rect x="395" y="415" width="1" height="9" fill="#FF0000"/><rect x="396" y="427" width="1" height="7" fill="#FF0000"/><rect x="400" y="443" width="1" height="3" fill="#FF0000"/><rect x="404" y="477" width="1" height="5" fill="#FF0000"/><rect x="405" y="493" width="1" height="9" fill="#FF0000"/><rect x="406" y="509" width="1" height="4" fill="#FF0000"/><rect x="407" y="527" width="1" height="7" fill="#FF0000"/><rect x="415" y="555" width="1" height="8" fill="#FF0000"/><rect x="425" y="594" width="1" height="5" fill="#FF0000"/><rect x="430" y="617" width="1" height="15" fill="#FF0000"/><rect x="435" y="650" width="1" height="12" fill="#FF0000"/><rect x="439" y="684" width="1" height="30" fill="#FF0000"/><rect x="475" y="866" width="1" height="3" fill="#FF0000"/><rect x="483" y="874" width="1" height="8" fill="#FF0000"/><rect x="521" y="890" width="1" height="24" fill="#00FF00"/><rect x="523" y="873" width="1" height="15" fill="#00FF00"/><rect x="566" y="821" width="1" height="20" fill="#00FF00"/><rect x="582" y="795" width="1" height="15" fill="#00FF00"/><rect x="600" y="726" width="1" height="22" fill="#00FF00"/><rect x="610" y="670" width="1" height="11" fill="#00FF00"/><rect x="612" y="650" width="1" height="12" fill="#00FF00"/><rect x="613" y="616" width="1" height="24" fill="#00FF00"/><rect x="616" y="583" width="1" height="25" fill="#00FF00"/><rect x="620" y="539" width="1" height="17" fill="#00FF00"/><rect x="630" y="508" width="1" height="6" fill="#00FF00"/><rect x="632" y="484" width="1" height="22" fill="#00FF00"/><rect x="634" y="450" width="1" height="29" fill="#00FF00"/><rect x="643" y="347" width="1" height="32" fill="#00FF00"/><rect x="667" y="350" width="1" height="15" fill="#FF0000"/><rect x="671" y="384" width="1" height="28" fill="#FF0000"/><rect x="680" y="415" width="1" height="9" fill="#FF0000"/><rect x="681" y="440" width="1" height="6" fill="#FF0000"/><rect x="691" y="516" width="1" height="19" fill="#FF0000"/><rect x="692" y="538" width="1" height="3" fill="#FF0000"/><rect x="698" y="583" width="1" height="31" fill="#FF0000"/><rect x="707" y="622" width="1" height="5" fill="#FF0000"/><rect x="743" y="616" width="1" height="11" fill="#00FF00"/><rect x="762" y="617" width="1" height="12" fill="#FF0000"/><rect x="770" y="676" width="1" height="6" fill="#FF0000"/><rect x="777" y="709" width="1" height="6" fill="#FF0000"/><rect x="791" y="684" width="1" height="28" fill="#00FF00"/><rect x="793" y="673" width="1" height="9" fill="#00FF00"/><rect x="797" y="624" width="1" height="22" fill="#00FF00"/><rect x="805" y="581" width="1" height="25" fill="#00FF00"/><rect x="807" y="564" width="1" height="10" fill="#00FF00"/><rect x="827" y="485" width="1" height="19" fill="#00FF00"/><rect x="843" y="390" width="1" height="24" fill="#00FF00"/><rect x="845" y="366" width="1" height="27" fill="#00FF00"/><rect x="850" y="345" width="1" height="18" fill="#00FF00"/><rect x="852" y="333" width="1" height="12" fill="#00FF00"/><rect x="861" y="295" width="1" height="9" fill="#00FF00"/><rect x="868" y="249" width="1" height="27" fill="#00FF00"/><rect x="873" y="221" width="1" height="18" fill="#00FF00"/><g fill="#C0F880"><rect x="26" y="630" width="3" height="3"/><rect x="28" y="633" width="2" height="3"/><rect x="29" y="636" width="3" height="3"/><rect x="30" y="642" width="2" height="3"/><rect x="31" y="647" width="3" height="3"/><rect x="33" y="660" width="7" height="3"/><rect x="39" y="681" width="2" height="3"/><rect x="39" y="694" width="4" height="3"/><rect x="42" y="712" width="5" height="3"/><rect x="47" y="714" width="2" height="3"/><rect x="47" y="724" width="2" height="3"/><rect x="48" y="738" width="4" height="3"/><rect x="51" y="748" width="2" height="3"/><rect x="52" y="765" width="2" height="3"/><rect x="53" y="779" width="2" height="3"/><rect x="54" y="781" width="2" height="3"/><rect x="54" y="798" width="11" height="3"/><rect x="63" y="815" width="2" height="3"/><rect x="64" y="837" width="16" height="3"/><rect x="79" y="848" width="2" height="3"/><rect x="79" y="856" width="2" height="3"/><rect x="80" y="867" width="2" height="3"/><rect x="80" y="873" width="2" height="3"/><rect x="82" y="884" width="27" height="3"/><rect x="82" y="885" width="5" height="4"/><rect x="108" y="835" width="2" height="3"/><rect x="107" y="848" width="2" height="3"/><rect x="108" y="817" width="10" height="3"/><rect x="112" y="819" width="27" height="3"/><rect x="137" y="830" width="13" height="3"/><rect x="145" y="832" width="18" height="3"/><rect x="162" y="856" width="2" height="3"/><rect x="162" y="871" width="3" height="3"/><rect x="163" y="882" width="5" height="3"/><rect x="167" y="886" width="3" height="3"/><rect x="168" y="902" width="2" height="3"/><rect x="169" y="906" width="2" height="3"/><rect x="169" y="915" width="3" height="3"/><rect x="170" y="925" width="3" height="3"/><rect x="171" y="949" width="2" height="3"/><rect x="172" y="966" width="7" height="3"/><rect x="178" y="964" width="20" height="3"/><rect x="196" y="915" width="17" height="3"/><rect x="211" y="898" width="3" height="4"/><rect x="212" y="892" width="2" height="4"/><rect x="213" y="887" width="3" height="3"/><rect x="214" y="882" width="2" height="3"/><rect x="215" y="876" width="3" height="3"/><rect x="217" y="848" width="7" height="3"/><rect x="223" y="831" width="3" height="3"/><rect x="225" y="827" width="4" height="3"/><rect x="226" y="815" width="2" height="3"/><rect x="227" y="806" width="5" height="3"/><rect x="231" y="789" width="2" height="5"/><rect x="232" y="783" width="5" height="3"/><rect x="236" y="779" width="3" height="4"/><rect x="237" y="748" width="8" height="3"/><rect x="244" y="720" width="4" height="3"/><rect x="246" y="714" width="2" height="3"/><rect x="247" y="698" width="3" height="3"/><rect x="248" y="686" width="4" height="3"/><rect x="250" y="681" width="2" height="3"/><rect x="251" y="660" width="2" height="3"/><rect x="251" y="655" width="2" height="3"/><rect x="252" y="647" width="2" height="3"/><rect x="252" y="638" width="3" height="3"/><rect x="254" y="614" width="2" height="3"/><rect x="254" y="610" width="3" height="3"/><rect x="256" y="602" width="2" height="3"/><rect x="256" y="579" width="2" height="3"/><rect x="257" y="578" width="4" height="3"/><rect x="260" y="548" width="4" height="4"/><rect x="262" y="547" width="3" height="3"/><rect x="263" y="537" width="2" height="3"/><rect x="264" y="528" width="2" height="3"/><rect x="264" y="521" width="3" height="3"/><rect x="265" y="513" width="2" height="3"/><rect x="266" y="508" width="2" height="3"/><rect x="268" y="504" width="2" height="3"/><rect x="270" y="501" width="2" height="3"/><rect x="270" y="488" width="4" height="3"/><rect x="272" y="483" width="2" height="3"/><rect x="273" y="479" width="3" height="3"/><rect x="274" y="472" width="4" height="3"/><rect x="277" y="463" width="3" height="3"/><rect x="278" y="467" width="2" height="3"/><rect x="278" y="455" width="3" height="3"/><rect x="279" y="446" width="3" height="3"/><rect x="280" y="433" width="6" height="3"/><rect x="284" y="427" width="3" height="3"/><rect x="286" y="424" width="3" height="3"/><rect x="286" y="417" width="2" height="3"/><rect x="287" y="420" width="2" height="3"/><rect x="287" y="407" width="3" height="3"/><rect x="288" y="390" width="6" height="3"/><rect x="292" y="379" width="2" height="3"/><rect x="293" y="372" width="4" height="3"/><rect x="295" y="370" width="4" height="3"/><rect x="297" y="364" width="3" height="3"/><rect x="298" y="368" width="2" height="3"/><rect x="298" y="358" width="2" height="3"/><rect x="299" y="336" width="6" height="3"/><rect x="299" y="341" width="3" height="3"/><rect x="300" y="345" width="2" height="3"/><rect x="303" y="317" width="3" height="3"/><rect x="304" y="321" width="2" height="3"/><rect x="305" y="306" width="2" height="3"/><rect x="306" y="313" width="2" height="3"/><rect x="306" y="296" width="3" height="3"/><rect x="308" y="300" width="2" height="3"/><rect x="308" y="284" width="3" height="3"/><rect x="309" y="278" width="2" height="3"/><rect x="309" y="272" width="2" height="3"/><rect x="310" y="263" width="3" height="3"/><rect x="311" y="267" width="2" height="3"/><rect x="311" y="252" width="4" height="3"/><rect x="313" y="255" width="3" height="3"/><rect x="314" y="245" width="3" height="3"/><rect x="315" y="249" width="2" height="3"/><rect x="315" y="239" width="3" height="4"/><rect x="317" y="211" width="2" height="3"/><rect x="317" y="194" width="5" height="3"/><rect x="322" y="194" width="2" height="3"/><rect x="319" y="183" width="2" height="3"/><rect x="320" y="178" width="4" height="3"/><rect x="323" y="172" width="27" height="3"/><rect x="323" y="170" width="2" height="2"/><rect x="348" y="176" width="6" height="3"/><rect x="351" y="178" width="3" height="3"/><rect x="352" y="193" width="3" height="3"/><rect x="354" y="196" width="2" height="3"/><rect x="354" y="211" width="3" height="3"/><rect x="355" y="219" width="12" height="3"/><rect x="365" y="232" width="4" height="3"/><rect x="367" y="241" width="2" height="3"/><rect x="368" y="246" width="2" height="3"/><rect x="368" y="252" width="2" height="3"/><rect x="369" y="254" width="6" height="3"/><rect x="373" y="265" width="2" height="3"/><rect x="374" y="278" width="2" height="3"/><rect x="375" y="283" width="2" height="3"/><rect x="376" y="287" width="2" height="3"/><rect x="377" y="290" width="2" height="3"/><rect x="376" y="295" width="3" height="3"/><rect x="377" y="306" width="2" height="3"/><rect x="377" y="311" width="3" height="3"/><rect x="378" y="314" width="2" height="3"/><rect x="379" y="329" width="2" height="3"/><rect x="379" y="344" width="2" height="3"/><rect x="380" y="346" width="7" height="3"/><rect x="385" y="368" width="5" height="3"/><rect x="389" y="370" width="2" height="3"/><rect x="389" y="379" width="3" height="3"/><rect x="390" y="396" width="3" height="3"/><rect x="392" y="401" width="2" height="3"/><rect x="393" y="412" width="3" height="3"/><rect x="395" y="424" width="2" height="3"/><rect x="396" y="433" width="3" height="3"/><rect x="398" y="437" width="2" height="3"/><rect x="399" y="441" width="2" height="3"/><rect x="400" y="446" width="2" height="3"/><rect x="400" y="452" width="2" height="3"/><rect x="401" y="456" width="2" height="3"/><rect x="402" y="459" width="2" height="3"/><rect x="402" y="474" width="2" height="3"/><rect x="403" y="489" width="3" height="4"/><rect x="405" y="502" width="2" height="3"/><rect x="405" y="506" width="2" height="3"/><rect x="406" y="513" width="2" height="3"/><rect x="406" y="524" width="2" height="3"/><rect x="407" y="534" width="3" height="3"/><rect x="408" y="539" width="3" height="3"/><rect x="410" y="541" width="3" height="3"/><rect x="412" y="543" width="2" height="3"/><rect x="413" y="547" width="2" height="3"/><rect x="414" y="553" width="2" height="3"/><rect x="415" y="556" width="2" height="3"/><rect x="415" y="560" width="2" height="3"/><rect x="416" y="565" width="2" height="3"/><rect x="416" y="569" width="5" height="3"/><rect x="419" y="575" width="2" height="3"/><rect x="421" y="578" width="2" height="3"/><rect x="422" y="582" width="2" height="3"/><rect x="423" y="585" width="2" height="3"/><rect x="424" y="588" width="2" height="3"/><rect x="424" y="591" width="2" height="3"/><rect x="425" y="597" width="4" height="3"/><rect x="427" y="602" width="2" height="3"/><rect x="428" y="607" width="2" height="3"/><rect x="428" y="610" width="2" height="3"/><rect x="429" y="614" width="2" height="3"/><rect x="430" y="632" width="6" height="3"/><rect x="434" y="647" width="2" height="3"/><rect x="435" y="662" width="2" height="3"/><rect x="435" y="681" width="5" height="3"/><rect x="439" y="714" width="2" height="3"/><rect x="439" y="746" width="2" height="3"/><rect x="440" y="749" width="4" height="3"/><rect x="442" y="776" width="14" height="3"/><rect x="454" y="779" width="3" height="3"/><rect x="456" y="783" width="2" height="3"/><rect x="456" y="815" width="3" height="3"/><rect x="457" y="830" width="2" height="3"/><rect x="458" y="834" width="2" height="3"/><rect x="458" y="847" width="3" height="3"/><rect x="460" y="848" width="14" height="3"/><rect x="473" y="852" width="2" height="3"/><rect x="473" y="863" width="3" height="3"/><rect x="475" y="869" width="2" height="3"/><rect x="475" y="871" width="9" height="3"/><rect x="483" y="882" width="2" height="3"/><rect x="483" y="906" width="3" height="3"/><rect x="485" y="910" width="2" height="3"/><rect x="485" y="914" width="3" height="3"/><rect x="487" y="915" width="35" height="3"/><rect x="521" y="904" width="2" height="3"/><rect x="521" y="910" width="2" height="3"/><rect x="522" y="888" width="2" height="3"/><rect x="522" y="871" width="3" height="3"/><rect x="522" y="882" width="2" height="3"/><rect x="523" y="861" width="3" height="3"/><rect x="524" y="848" width="43" height="3"/><rect x="565" y="841" width="2" height="3"/><rect x="566" y="820" width="16" height="3"/><rect x="581" y="810" width="2" height="3"/><rect x="581" y="815" width="2" height="3"/><rect x="582" y="794" width="2" height="3"/><rect x="582" y="787" width="3" height="3"/><rect x="583" y="781" width="16" height="3"/><rect x="587" y="784" width="2" height="2"/><rect x="597" y="771" width="2" height="3"/><rect x="598" y="768" width="2" height="3"/><rect x="598" y="763" width="4" height="3"/><rect x="599" y="748" width="2" height="3"/><rect x="600" y="724" width="4" height="3"/><rect x="602" y="721" width="2" height="3"/><rect x="603" y="716" width="3" height="3"/><rect x="605" y="715" width="2" height="3"/><rect x="606" y="705" width="2" height="3"/><rect x="607" y="709" width="2" height="3"/><rect x="607" y="681" width="4" height="3"/><rect x="610" y="672" width="2" height="3"/><rect x="611" y="667" width="2" height="3"/><rect x="610" y="662" width="2" height="3"/><rect x="612" y="647" width="2" height="3"/><rect x="612" y="640" width="2" height="3"/><rect x="613" y="614" width="3" height="3"/><rect x="615" y="612" width="2" height="3"/><rect x="615" y="608" width="2" height="3"/><rect x="616" y="580" width="2" height="3"/><rect x="616" y="575" width="3" height="3"/><rect x="618" y="570" width="3" height="3"/><rect x="619" y="556" width="2" height="3"/><rect x="620" y="537" width="4" height="3"/><rect x="623" y="530" width="4" height="3"/><rect x="625" y="524" width="5" height="3"/><rect x="628" y="521" width="2" height="3"/><rect x="629" y="513" width="2" height="3"/><rect x="630" y="506" width="2" height="3"/><rect x="631" y="491" width="2" height="3"/><rect x="632" y="480" width="2" height="4"/><rect x="632" y="479" width="2" height="5"/><rect x="633" y="466" width="2" height="3"/><rect x="634" y="449" width="3" height="3"/><rect x="636" y="446" width="2" height="3"/><rect x="636" y="413" width="4" height="3"/><rect x="639" y="409" width="2" height="3"/><rect x="639" y="379" width="4" height="3"/><rect x="642" y="362" width="2" height="3"/><rect x="643" y="367" width="2" height="3"/><rect x="643" y="345" width="5" height="3"/><rect x="646" y="347" width="25" height="3"/><rect x="667" y="364" width="2" height="3"/><rect x="668" y="368" width="2" height="3"/><rect x="668" y="379" width="3" height="3"/><rect x="670" y="382" width="2" height="3"/><rect x="671" y="412" width="10" height="3"/><rect x="680" y="424" width="2" height="3"/><rect x="680" y="437" width="2" height="3"/><rect x="681" y="446" width="2" height="3"/><rect x="682" y="449" width="2" height="3"/><rect x="682" y="479" width="4" height="3"/><rect x="685" y="482" width="2" height="3"/><rect x="685" y="496" width="6" height="3"/><rect x="689" y="506" width="2" height="3"/><rect x="690" y="508" width="2" height="3"/><rect x="690" y="513" width="2" height="3"/><rect x="691" y="535" width="2" height="3"/><rect x="692" y="541" width="2" height="3"/><rect x="692" y="547" width="2" height="3"/><rect x="693" y="550" width="3" height="3"/><rect x="694" y="578" width="3" height="3"/><rect x="697" y="581" width="2" height="3"/><rect x="698" y="614" width="10" height="3"/><rect x="706" y="619" width="2" height="3"/><rect x="707" y="627" width="2" height="3"/><rect x="708" y="629" width="26" height="3"/><rect x="731" y="627" width="13" height="3"/><rect x="743" y="614" width="2" height="3"/><rect x="745" y="612" width="2" height="3"/><rect x="746" y="610" width="2" height="2"/><rect x="746" y="589" width="8" height="3"/><rect x="751" y="591" width="12" height="3"/><rect x="761" y="614" width="2" height="3"/><rect x="762" y="629" width="3" height="3"/><rect x="763" y="645" width="3" height="3"/><rect x="765" y="648" width="2" height="3"/><rect x="767" y="652" width="3" height="3"/><rect x="767" y="662" width="2" height="3"/><rect x="768" y="665" width="2" height="3"/><rect x="768" y="671" width="2" height="3"/><rect x="769" y="674" width="2" height="3"/><rect x="770" y="681" width="2" height="3"/><rect x="771" y="683" width="3" height="3"/><rect x="772" y="690" width="2" height="3"/><rect x="773" y="693" width="2" height="3"/><rect x="774" y="695" width="3" height="3"/><rect x="775" y="705" width="3" height="3"/><rect x="777" y="714" width="2" height="3"/><rect x="777" y="735" width="2" height="3"/><rect x="778" y="740" width="12" height="3"/><rect x="788" y="712" width="4" height="3"/><rect x="791" y="681" width="2" height="3"/><rect x="792" y="682" width="2" height="3"/><rect x="793" y="670" width="3" height="3"/><rect x="794" y="656" width="2" height="3"/><rect x="795" y="660" width="2" height="3"/><rect x="795" y="645" width="2" height="3"/><rect x="796" y="648" width="2" height="3"/><rect x="797" y="623" width="6" height="3"/><rect x="801" y="614" width="5" height="3"/><rect x="804" y="606" width="2" height="3"/><rect x="804" y="582" width="2" height="3"/><rect x="805" y="577" width="2" height="3"/><rect x="806" y="574" width="2" height="3"/><rect x="805" y="573" width="2" height="3"/><rect x="807" y="560" width="8" height="3"/><rect x="807" y="564" width="2" height="3"/><rect x="813" y="556" width="2" height="3"/><rect x="814" y="550" width="2" height="3"/><rect x="815" y="548" width="3" height="3"/><rect x="817" y="545" width="2" height="3"/><rect x="817" y="530" width="2" height="3"/><rect x="818" y="535" width="2" height="3"/><rect x="818" y="540" width="2" height="3"/><rect x="819" y="524" width="3" height="3"/><rect x="821" y="510" width="2" height="3"/><rect x="822" y="515" width="2" height="3"/><rect x="822" y="520" width="2" height="3"/><rect x="823" y="504" width="5" height="3"/><rect x="827" y="483" width="2" height="3"/><rect x="829" y="479" width="2" height="3"/><rect x="829" y="457" width="2" height="3"/><rect x="830" y="462" width="2" height="3"/><rect x="831" y="458" width="2" height="3"/><rect x="832" y="444" width="5" height="3"/><rect x="831" y="447" width="2" height="3"/><rect x="835" y="428" width="3" height="3"/><rect x="837" y="424" width="3" height="3"/><rect x="839" y="420" width="2" height="3"/><rect x="840" y="417" width="2" height="3"/><rect x="840" y="414" width="2" height="3"/><rect x="841" y="409" width="2" height="3"/><rect x="842" y="404" width="2" height="3"/><rect x="843" y="393" width="2" height="3"/><rect x="844" y="397" width="2" height="3"/><rect x="845" y="378" width="2" height="3"/><rect x="846" y="364" width="3" height="3"/><rect x="848" y="363" width="3" height="3"/><rect x="849" y="344" width="3" height="3"/><rect x="852" y="330" width="4" height="3"/><rect x="854" y="317" width="2" height="3"/><rect x="855" y="314" width="3" height="3"/><rect x="856" y="312" width="6" height="3"/><rect x="860" y="304" width="2" height="3"/><rect x="861" y="293" width="6" height="3"/><rect x="866" y="289" width="2" height="3"/><rect x="866" y="277" width="2" height="3"/><rect x="867" y="282" width="2" height="3"/><rect x="868" y="246" width="3" height="3"/><rect x="870" y="245" width="3" height="3"/><rect x="871" y="240" width="3" height="3"/><rect x="873" y="223" width="2" height="3"/><rect x="874" y="210" width="2" height="3"/><rect x="874" y="205" width="2" height="3"/><rect x="875" y="198" width="2" height="3"/><rect x="876" y="201" width="2" height="3"/></g></svg>
<div style="left:497px;top:140px;width:1px;height:844px;background:#FFFFFF;"></div>
<div class="t" style="left:963.00px;top:145.38px;font-size:11.6px;line-height:11.6px;color:#FFFFFF;letter-spacing:-0.078px;">ESH22-CME [CB][M]  2 Trades  #5</div>
<div style="left:1142px;top:144px;width:55px;height:15px;background:#FFFFFF;"></div>
<div class="t" style="left:1143.50px;top:145.38px;font-size:11.6px;line-height:11.6px;color:#000;letter-spacing:-0.423px;">C: 4435.25</div>
<div class="t" style="left:1199.00px;top:145.38px;font-size:11.6px;line-height:11.6px;color:#FFFFFF;letter-spacing:-0.347px;">T: 2</div>
<div style="left:1220px;top:144px;width:51px;height:15px;background:#FFFFFF;"></div>
<div class="t" style="left:1221.00px;top:145.38px;font-size:11.6px;line-height:11.6px;color:#000;letter-spacing:-0.198px;">Chg: 0.00</div>
<div style="left:1271.5px;top:144px;width:59.5px;height:15px;background:#FFFFFF;"></div>
<div class="t" style="left:1273.00px;top:145.38px;font-size:11.6px;line-height:11.6px;color:#000;letter-spacing:-0.166px;">DChg: 0.00</div>
<div class="t" style="left:1333.00px;top:145.38px;font-size:11.6px;line-height:11.6px;color:#FFFFFF;letter-spacing:-0.273px;">2022-01-30 21:58:09 H: 4435.25 L: 4435.25 O: 4435.25 V: 2 B: 0.00 A: 0.00 0x0 RT:0 BV: 0 AV: 2 DV: 0</div>
<div style="left:958px;top:144px;width:1px;height:843px;background:#FFFFFF;"></div>
<div style="left:959px;top:175px;width:902px;height:1px;background:#FFFFFF;"></div>
<div style="left:1857px;top:144px;width:1px;height:843px;background:#FFFFFF;"></div>
<div style="left:1861px;top:144px;width:1px;height:843px;background:#FFFFFF;"></div>
<div style="left:958px;top:986px;width:904px;height:1px;background:#FFFFFF;"></div>
<div style="left:1861px;top:970px;width:5px;height:1px;background:#FFFFFF;"></div>
<div class="t" style="left:1866.40px;top:964.79px;font-size:11px;line-height:11px;color:#FFFFFF;letter-spacing:-0.195px;">4433.00</div>
<div style="left:1861px;top:891px;width:5px;height:1px;background:#FFFFFF;"></div>
<div class="t" style="left:1866.40px;top:885.79px;font-size:11px;line-height:11px;color:#FFFFFF;letter-spacing:-0.195px;">4433.25</div>
<div style="left:1861px;top:811px;width:5px;height:1px;background:#FFFFFF;"></div>
<div class="t" style="left:1866.40px;top:805.79px;font-size:11px;line-height:11px;color:#FFFFFF;letter-spacing:-0.195px;">4433.50</div>
<div style="left:1861px;top:732px;width:5px;height:1px;background:#FFFFFF;"></div>
<div class="t" style="left:1866.40px;top:726.79px;font-size:11px;line-height:11px;color:#FFFFFF;letter-spacing:-0.195px;">4433.75</div>
<div style="left:1861px;top:652px;width:5px;height:1px;background:#FFFFFF;"></div>
<div class="t" style="left:1866.40px;top:646.79px;font-size:11px;line-height:11px;color:#FFFFFF;letter-spacing:-0.195px;">4434.00</div>
<div style="left:1861px;top:573px;width:5px;height:1px;background:#FFFFFF;"></div>
<div class="t" style="left:1866.40px;top:567.79px;font-size:11px;line-height:11px;color:#FFFFFF;letter-spacing:-0.195px;">4434.25</div>
<div style="left:1861px;top:493px;width:5px;height:1px;background:#FFFFFF;"></div>
<div class="t" style="left:1866.40px;top:487.79px;font-size:11px;line-height:11px;color:#FFFFFF;letter-spacing:-0.195px;">4434.50</div>
<div style="left:1861px;top:414px;width:5px;height:1px;background:#FFFFFF;"></div>
<div class="t" style="left:1866.40px;top:408.79px;font-size:11px;line-height:11px;color:#FFFFFF;letter-spacing:-0.195px;">4434.75</div>
<div style="left:1861px;top:334px;width:5px;height:1px;background:#FFFFFF;"></div>
<div class="t" style="left:1866.40px;top:328.79px;font-size:11px;line-height:11px;color:#FFFFFF;letter-spacing:-0.195px;">4435.00</div>
<div style="left:1861px;top:255px;width:5px;height:1px;background:#FFFFFF;"></div>
<div style="left:1865px;top:248px;width:41px;height:15px;background:#FFFFFF;"></div>
<div class="t" style="left:1866.40px;top:249.79px;font-size:11px;line-height:11px;color:#000;letter-spacing:-0.195px;">4435.25</div>
<div style="left:1861px;top:175px;width:5px;height:1px;background:#FFFFFF;"></div>
<div style="left:1865px;top:168px;width:41px;height:15px;background:#FFFFFF;"></div>
<div class="t" style="left:1866.40px;top:169.79px;font-size:11px;line-height:11px;color:#000;letter-spacing:-0.195px;">4435.50</div>
<div style="left:962px;top:987px;width:1px;height:3px;background:#FFFFFF;"></div>
<div style="left:1018px;top:987px;width:1px;height:3px;background:#FFFFFF;"></div>
<div style="left:1069px;top:987px;width:1px;height:3px;background:#FFFFFF;"></div>
<div style="left:1120px;top:987px;width:1px;height:3px;background:#FFFFFF;"></div>
<div style="left:1172px;top:987px;width:1px;height:3px;background:#FFFFFF;"></div>
<div style="left:1222px;top:987px;width:1px;height:3px;background:#FFFFFF;"></div>
<div style="left:1273px;top:987px;width:1px;height:3px;background:#FFFFFF;"></div>
<div style="left:1324px;top:987px;width:1px;height:3px;background:#FFFFFF;"></div>
<div style="left:1376px;top:987px;width:1px;height:3px;background:#FFFFFF;"></div>
<div style="left:1426px;top:987px;width:1px;height:3px;background:#FFFFFF;"></div>
<div style="left:1478px;top:987px;width:1px;height:3px;background:#FFFFFF;"></div>
<div style="left:1528px;top:987px;width:1px;height:3px;background:#FFFFFF;"></div>
<div style="left:1580px;top:987px;width:1px;height:3px;background:#FFFFFF;"></div>
<div style="left:1630px;top:987px;width:1px;height:3px;background:#FFFFFF;"></div>
<div style="left:1682px;top:987px;width:1px;height:3px;background:#FFFFFF;"></div>
<div style="left:1732px;top:987px;width:1px;height:3px;background:#FFFFFF;"></div>
<div style="left:1784px;top:987px;width:1px;height:3px;background:#FFFFFF;"></div>
<div style="left:1827px;top:987px;width:1px;height:3px;background:#FFFFFF;"></div>
<div class="t" style="left:997.09px;top:992.59px;font-size:11px;line-height:11px;color:#FFFFFF;">21:46:02</div>
<div class="t" style="left:1047.99px;top:992.59px;font-size:11px;line-height:11px;color:#FFFFFF;">21:46:39</div>
<div class="t" style="left:1099.09px;top:992.59px;font-size:11px;line-height:11px;color:#FFFFFF;">21:46:54</div>
<div class="t" style="left:1150.09px;top:992.59px;font-size:11px;line-height:11px;color:#FFFFFF;">21:47:59</div>
<div class="t" style="left:1201.09px;top:992.59px;font-size:11px;line-height:11px;color:#FFFFFF;">21:48:17</div>
<div class="t" style="left:1251.89px;top:992.59px;font-size:11px;line-height:11px;color:#FFFFFF;">21:48:34</div>
<div class="t" style="left:1302.99px;top:992.59px;font-size:11px;line-height:11px;color:#FFFFFF;">21:49:24</div>
<div class="t" style="left:1354.09px;top:992.59px;font-size:11px;line-height:11px;color:#FFFFFF;">21:50:31</div>
<div class="t" style="left:1405.09px;top:992.59px;font-size:11px;line-height:11px;color:#FFFFFF;">21:51:38</div>
<div class="t" style="left:1456.09px;top:992.59px;font-size:11px;line-height:11px;color:#FFFFFF;">21:52:36</div>
<div class="t" style="left:1507.09px;top:992.59px;font-size:11px;line-height:11px;color:#FFFFFF;">21:52:48</div>
<div class="t" style="left:1558.09px;top:992.59px;font-size:11px;line-height:11px;color:#FFFFFF;">21:54:16</div>
<div class="t" style="left:1608.99px;top:992.59px;font-size:11px;line-height:11px;color:#FFFFFF;">21:55:31</div>
<div class="t" style="left:1660.09px;top:992.59px;font-size:11px;line-height:11px;color:#FFFFFF;">21:56:55</div>
<div class="t" style="left:1710.89px;top:992.59px;font-size:11px;line-height:11px;color:#FFFFFF;">21:57:17</div>
<div class="t" style="left:1762.09px;top:992.59px;font-size:11px;line-height:11px;color:#FFFFFF;">21:57:44</div>
<div style="left:959px;top:990px;width:30px;height:15px;background:#FFFFFF;"></div>
<div class="t" style="left:960.00px;top:992.59px;font-size:11px;line-height:11px;color:#000;letter-spacing:0.263px;">-1-30</div>
<div style="left:1787px;top:991px;width:124px;height:14px;background:#FFFFFF;"></div>
<div class="t" style="left:1792.00px;top:992.59px;font-size:11px;line-height:11px;color:#000;letter-spacing:0.132px;clip-path:inset(-5px 13px -5px 0)">Sun 2022-01-30  21:58:09</div>
<div style="left:1911px;top:990px;width:2px;height:16px;background:#FFFFFF;"></div>
<div style="left:958px;top:1006px;width:953px;height:16px;background:#FFFFFF;"></div>
<div style="left:958px;top:1022px;width:953px;height:1px;background:#C8C8C8;"></div>
<div style="left:974px;top:1006px;width:1px;height:16px;background:#E0E0E0;"></div>
<div style="left:1877px;top:1006px;width:17px;height:16px;background:#DCDCDC;box-sizing:border-box;border:1px solid #C4C4C4"></div>
<div style="left:1910px;top:1006px;width:1px;height:17px;background:#C8C8C8;"></div>
<svg style="left:962px;top:1009px" width="8" height="10" viewBox="0 0 8 10"><path d="M6 1 L2 5 L6 9" stroke="#606060" stroke-width="1.2" fill="none"/></svg>
<svg style="left:1898px;top:1009px" width="8" height="10" viewBox="0 0 8 10"><path d="M2 1 L6 5 L2 9" stroke="#606060" stroke-width="1.2" fill="none"/></svg>
<svg style="left:959px;top:144px" width="898" height="842" viewBox="959 144 898 842" shape-rendering="crispEdges"><rect x="1027" y="334" width="1" height="80" fill="#00FF00"/><rect x="1114" y="334" width="1" height="80" fill="#00FF00"/><rect x="998" y="414" width="1" height="159" fill="#FF0000"/><rect x="990" y="493" width="1" height="80" fill="#00FF00"/><rect x="1002" y="493" width="1" height="80" fill="#FF0000"/><rect x="1018" y="493" width="1" height="80" fill="#00FF00"/><rect x="1029" y="493" width="1" height="80" fill="#FF0000"/><rect x="1088" y="493" width="1" height="80" fill="#FF0000"/><rect x="1126" y="493" width="1" height="80" fill="#FF0000"/><rect x="1128" y="493" width="1" height="80" fill="#00FF00"/><rect x="1102" y="414" width="1" height="79" fill="#00FF00"/><rect x="1121" y="414" width="1" height="79" fill="#FF0000"/><rect x="970" y="652" width="1" height="80" fill="#FF0000"/><rect x="976" y="652" width="1" height="80" fill="#FF0000"/><rect x="981" y="652" width="1" height="80" fill="#00FF00"/><rect x="1032" y="652" width="1" height="80" fill="#FF0000"/><rect x="1051" y="652" width="1" height="80" fill="#00FF00"/><rect x="1053" y="652" width="1" height="80" fill="#00FF00"/><rect x="1034" y="732" width="1" height="79" fill="#FF0000"/><rect x="1041" y="732" width="1" height="79" fill="#FF0000"/><rect x="1056" y="732" width="1" height="79" fill="#FF0000"/><rect x="1062" y="732" width="1" height="79" fill="#00FF00"/><rect x="1060" y="811" width="1" height="80" fill="#FF0000"/><rect x="1157" y="334" width="1" height="80" fill="#00FF00"/><rect x="1164" y="334" width="1" height="80" fill="#FF0000"/><rect x="1120" y="414" width="1" height="79" fill="#FF0000"/><rect x="1153" y="414" width="1" height="79" fill="#00FF00"/><rect x="1154" y="414" width="1" height="79" fill="#00FF00"/><rect x="1167" y="414" width="1" height="79" fill="#FF0000"/><rect x="1126" y="493" width="1" height="80" fill="#00FF00"/><rect x="1136" y="493" width="1" height="80" fill="#00FF00"/><rect x="1151" y="493" width="1" height="80" fill="#00FF00"/><rect x="1174" y="493" width="1" height="80" fill="#FF0000"/><rect x="1362" y="493" width="1" height="80" fill="#00FF00"/><rect x="1366" y="493" width="1" height="80" fill="#FF0000"/><rect x="1299" y="493" width="1" height="159" fill="#FF0000"/><rect x="1140" y="573" width="1" height="79" fill="#00FF00"/><rect x="1182" y="573" width="1" height="79" fill="#FF0000"/><rect x="1301" y="573" width="1" height="79" fill="#FF0000"/><rect x="1307" y="573" width="1" height="79" fill="#00FF00"/><rect x="1312" y="573" width="1" height="79" fill="#FF0000"/><rect x="1329" y="573" width="1" height="79" fill="#FF0000"/><rect x="1330" y="573" width="1" height="79" fill="#00FF00"/><rect x="1357" y="573" width="1" height="79" fill="#00FF00"/><rect x="1374" y="573" width="1" height="79" fill="#00FF00"/><rect x="1376" y="573" width="1" height="79" fill="#FF0000"/><rect x="1354" y="652" width="1" height="80" fill="#FF0000"/><rect x="1385" y="652" width="1" height="80" fill="#FF0000"/><rect x="1199" y="732" width="1" height="79" fill="#FF0000"/><rect x="1280" y="732" width="1" height="79" fill="#00FF00"/><rect x="1285" y="732" width="1" height="79" fill="#FF0000"/><rect x="1339" y="732" width="1" height="79" fill="#FF0000"/><rect x="1346" y="732" width="1" height="79" fill="#00FF00"/><rect x="1383" y="732" width="1" height="79" fill="#00FF00"/><rect x="1435" y="732" width="1" height="79" fill="#00FF00"/><rect x="1452" y="732" width="1" height="159" fill="#FF0000"/><rect x="1230" y="811" width="1" height="80" fill="#FF0000"/><rect x="1260" y="811" width="1" height="80" fill="#00FF00"/><rect x="1261" y="811" width="1" height="80" fill="#FF0000"/><rect x="1270" y="811" width="1" height="80" fill="#00FF00"/><rect x="1277" y="811" width="1" height="80" fill="#FF0000"/><rect x="1393" y="811" width="1" height="80" fill="#FF0000"/><rect x="1410" y="811" width="1" height="80" fill="#00FF00"/><rect x="1424" y="811" width="1" height="80" fill="#00FF00"/><rect x="1245" y="891" width="1" height="79" fill="#00FF00"/><rect x="1250" y="891" width="1" height="79" fill="#00FF00"/><rect x="1252" y="891" width="1" height="79" fill="#00FF00"/><rect x="1268" y="891" width="1" height="79" fill="#FF0000"/><rect x="1270" y="891" width="1" height="79" fill="#00FF00"/><rect x="1401" y="891" width="1" height="79" fill="#FF0000"/><rect x="1406" y="891" width="1" height="79" fill="#00FF00"/><rect x="1470" y="891" width="1" height="79" fill="#00FF00"/><rect x="1474" y="891" width="1" height="79" fill="#00FF00"/><rect x="1533" y="891" width="1" height="79" fill="#00FF00"/><rect x="1538" y="891" width="1" height="79" fill="#FF0000"/><rect x="1548" y="891" width="1" height="79" fill="#FF0000"/><rect x="1484" y="811" width="1" height="80" fill="#00FF00"/><rect x="1510" y="811" width="1" height="80" fill="#FF0000"/><rect x="1588" y="811" width="1" height="80" fill="#00FF00"/><rect x="1488" y="732" width="1" height="79" fill="#00FF00"/><rect x="1504" y="732" width="1" height="79" fill="#FF0000"/><rect x="1558" y="732" width="1" height="79" fill="#00FF00"/><rect x="1561" y="732" width="1" height="79" fill="#FF0000"/><rect x="1607" y="732" width="1" height="79" fill="#00FF00"/><rect x="1623" y="732" width="1" height="79" fill="#FF0000"/><rect x="1626" y="732" width="1" height="79" fill="#00FF00"/><rect x="1629" y="732" width="1" height="79" fill="#00FF00"/><rect x="1610" y="652" width="1" height="80" fill="#00FF00"/><rect x="1619" y="652" width="1" height="80" fill="#FF0000"/><rect x="1640" y="652" width="1" height="80" fill="#FF0000"/><rect x="1642" y="573" width="1" height="79" fill="#00FF00"/><rect x="1661" y="493" width="1" height="80" fill="#FF0000"/><rect x="1662" y="493" width="1" height="80" fill="#00FF00"/><rect x="1711" y="493" width="1" height="80" fill="#FF0000"/><rect x="1726" y="493" width="1" height="80" fill="#FF0000"/><rect x="1664" y="414" width="1" height="79" fill="#00FF00"/><rect x="1666" y="414" width="1" height="79" fill="#00FF00"/><rect x="1704" y="414" width="1" height="79" fill="#FF0000"/><rect x="1736" y="414" width="1" height="79" fill="#00FF00"/><rect x="1737" y="414" width="1" height="79" fill="#FF0000"/><rect x="1672" y="334" width="1" height="80" fill="#00FF00"/><rect x="1687" y="334" width="1" height="80" fill="#FF0000"/><rect x="1693" y="334" width="1" height="80" fill="#FF0000"/><rect x="1742" y="334" width="1" height="80" fill="#00FF00"/><rect x="1744" y="334" width="1" height="80" fill="#FF0000"/><rect x="1787" y="255" width="1" height="79" fill="#00FF00"/><rect x="1813" y="255" width="1" height="79" fill="#00FF00"/><rect x="1831" y="175" width="1" height="80" fill="#FF0000"/><rect x="1832" y="175" width="1" height="80" fill="#00FF00"/><rect x="1849" y="175" width="1" height="80" fill="#00FF00"/><rect x="1850" y="175" width="1" height="80" fill="#FF0000"/><g fill="#C0F880"><rect x="1822" y="174" width="25" height="3"/><rect x="1779" y="254" width="45" height="3"/><rect x="1830" y="254" width="3" height="3"/><rect x="1844" y="254" width="14" height="3"/><rect x="1026" y="333" width="3" height="3"/><rect x="1104" y="333" width="3" height="3"/><rect x="1113" y="333" width="3" height="3"/><rect x="1157" y="333" width="7" height="3"/><rect x="1672" y="333" width="22" height="3"/><rect x="1742" y="333" width="8" height="3"/><rect x="1756" y="333" width="25" height="3"/><rect x="1784" y="333" width="4" height="3"/><rect x="1810" y="333" width="3" height="3"/><rect x="1021" y="413" width="6" height="3"/><rect x="1101" y="413" width="20" height="3"/><rect x="1129" y="413" width="4" height="3"/><rect x="1152" y="413" width="5" height="3"/><rect x="1164" y="413" width="4" height="3"/><rect x="1662" y="413" width="10" height="3"/><rect x="1686" y="413" width="3" height="3"/><rect x="1693" y="413" width="11" height="3"/><rect x="1734" y="413" width="24" height="3"/><rect x="1775" y="413" width="3" height="3"/><rect x="990" y="492" width="17" height="3"/><rect x="1019" y="492" width="4" height="3"/><rect x="1026" y="492" width="4" height="3"/><rect x="1087" y="492" width="15" height="3"/><rect x="1107" y="492" width="4" height="3"/><rect x="1120" y="492" width="18" height="3"/><rect x="1141" y="492" width="12" height="3"/><rect x="1167" y="492" width="7" height="3"/><rect x="1298" y="492" width="3" height="3"/><rect x="1307" y="492" width="4" height="3"/><rect x="1317" y="492" width="5" height="3"/><rect x="1361" y="492" width="6" height="3"/><rect x="1648" y="492" width="3" height="3"/><rect x="1657" y="492" width="11" height="3"/><rect x="1704" y="492" width="9" height="3"/><rect x="1714" y="492" width="12" height="3"/><rect x="1729" y="492" width="8" height="3"/><rect x="964" y="572" width="4" height="3"/><rect x="988" y="572" width="3" height="3"/><rect x="1002" y="572" width="9" height="3"/><rect x="1015" y="572" width="4" height="3"/><rect x="1029" y="572" width="4" height="3"/><rect x="1079" y="572" width="11" height="3"/><rect x="1094" y="572" width="4" height="3"/><rect x="1124" y="572" width="6" height="3"/><rect x="1135" y="572" width="8" height="3"/><rect x="1150" y="572" width="3" height="3"/><rect x="1173" y="572" width="10" height="3"/><rect x="1295" y="572" width="10" height="3"/><rect x="1305" y="572" width="13" height="3"/><rect x="1320" y="572" width="12" height="3"/><rect x="1356" y="572" width="7" height="3"/><rect x="1366" y="572" width="11" height="3"/><rect x="1642" y="572" width="18" height="3"/><rect x="1662" y="572" width="3" height="3"/><rect x="1710" y="572" width="6" height="3"/><rect x="1725" y="572" width="7" height="3"/><rect x="961" y="651" width="16" height="3"/><rect x="981" y="651" width="9" height="3"/><rect x="1009" y="651" width="8" height="3"/><rect x="1031" y="651" width="3" height="3"/><rect x="1050" y="651" width="5" height="3"/><rect x="1066" y="651" width="18" height="3"/><rect x="1139" y="651" width="3" height="3"/><rect x="1182" y="651" width="15" height="3"/><rect x="1287" y="651" width="11" height="3"/><rect x="1300" y="651" width="7" height="3"/><rect x="1312" y="651" width="3" height="3"/><rect x="1328" y="651" width="5" height="3"/><rect x="1350" y="651" width="10" height="3"/><rect x="1362" y="651" width="3" height="3"/><rect x="1370" y="651" width="12" height="3"/><rect x="1610" y="651" width="6" height="3"/><rect x="1617" y="651" width="3" height="3"/><rect x="1638" y="651" width="5" height="3"/><rect x="970" y="731" width="3" height="3"/><rect x="976" y="731" width="8" height="3"/><rect x="1032" y="731" width="10" height="3"/><rect x="1046" y="731" width="12" height="3"/><rect x="1062" y="731" width="6" height="3"/><rect x="1195" y="731" width="5" height="3"/><rect x="1215" y="731" width="13" height="3"/><rect x="1280" y="731" width="11" height="3"/><rect x="1332" y="731" width="20" height="3"/><rect x="1353" y="731" width="3" height="3"/><rect x="1379" y="731" width="10" height="3"/><rect x="1435" y="731" width="17" height="3"/><rect x="1487" y="731" width="17" height="3"/><rect x="1558" y="731" width="4" height="3"/><rect x="1607" y="731" width="4" height="3"/><rect x="1614" y="731" width="9" height="3"/><rect x="1626" y="731" width="5" height="3"/><rect x="1634" y="731" width="7" height="3"/><rect x="1034" y="810" width="3" height="3"/><rect x="1041" y="810" width="7" height="3"/><rect x="1056" y="810" width="7" height="3"/><rect x="1198" y="810" width="11" height="3"/><rect x="1212" y="810" width="5" height="3"/><rect x="1226" y="810" width="5" height="3"/><rect x="1261" y="810" width="3" height="3"/><rect x="1270" y="810" width="11" height="3"/><rect x="1285" y="810" width="3" height="3"/><rect x="1337" y="810" width="3" height="3"/><rect x="1344" y="810" width="3" height="3"/><rect x="1383" y="810" width="13" height="3"/><rect x="1410" y="810" width="25" height="3"/><rect x="1443" y="810" width="4" height="3"/><rect x="1450" y="810" width="3" height="3"/><rect x="1484" y="810" width="4" height="3"/><rect x="1497" y="810" width="3" height="3"/><rect x="1504" y="810" width="6" height="3"/><rect x="1554" y="810" width="13" height="3"/><rect x="1588" y="810" width="19" height="3"/><rect x="1623" y="810" width="13" height="3"/><rect x="1059" y="890" width="3" height="3"/><rect x="1207" y="890" width="7" height="3"/><rect x="1230" y="890" width="5" height="3"/><rect x="1246" y="890" width="23" height="3"/><rect x="1276" y="890" width="4" height="3"/><rect x="1392" y="890" width="9" height="3"/><rect x="1405" y="890" width="6" height="3"/><rect x="1423" y="890" width="3" height="3"/><rect x="1452" y="890" width="7" height="3"/><rect x="1470" y="890" width="14" height="3"/><rect x="1509" y="890" width="14" height="3"/><rect x="1532" y="890" width="7" height="3"/><rect x="1544" y="890" width="12" height="3"/><rect x="1565" y="890" width="9" height="3"/><rect x="1583" y="890" width="6" height="3"/><rect x="1593" y="890" width="3" height="3"/><rect x="1233" y="969" width="13" height="3"/><rect x="1248" y="969" width="3" height="3"/><rect x="1251" y="969" width="3" height="3"/><rect x="1267" y="969" width="3" height="3"/><rect x="1400" y="969" width="6" height="3"/><rect x="1457" y="969" width="17" height="3"/><rect x="1521" y="969" width="14" height="3"/><rect x="1538" y="969" width="9" height="3"/><rect x="1572" y="969" width="13" height="3"/></g></svg>
<div style="left:959px;top:175px;width:902px;height:1px;background:#FFFFFF;"></div>
<div style="left:940px;top:110px;width:7px;height:331px;background:#EEF1FA;"></div>
<div style="left:946px;top:110px;width:1px;height:331px;background:#7A7A7A;"></div>
<div style="left:940px;top:441px;width:8px;height:540px;background:#000;"></div>
<svg style="left:940px;top:441px" width="8" height="520" viewBox="940 441 8 520" shape-rendering="crispEdges"><rect x="941" y="492" width="7" height="1" fill="#FF00FF"/><rect x="941" y="505" width="5" height="11" fill="none" stroke="#A0FF40" stroke-width="1.5"/><rect x="941" y="630" width="2" height="12" fill="#3070FF"/><rect x="944" y="626" width="2" height="10" fill="#3070FF"/><rect x="946" y="624" width="1" height="12" fill="#FF2020"/><rect x="944" y="674" width="1" height="20" fill="#10D010"/><rect x="940" y="693" width="7" height="27" fill="#10D010"/><rect x="943" y="700" width="2" height="8" fill="#FFFF00"/><rect x="946" y="700" width="2" height="20" fill="#FF2020"/><rect x="940" y="721" width="8" height="1" fill="#FFFFFF"/><rect x="940" y="726" width="8" height="12" fill="#FFFFFF"/><rect x="940" y="740" width="8" height="13" fill="#FFFFFF"/><rect x="940" y="753" width="8" height="3" fill="#E0E0E8"/><rect x="940" y="864" width="2" height="9" fill="#3070FF"/><rect x="940" y="878" width="2" height="80" fill="#3080FF"/><rect x="942" y="878" width="6" height="80" fill="#FF00FF"/><rect x="943" y="878" width="1" height="32" fill="#000"/><rect x="945" y="878" width="1" height="32" fill="#000"/></svg>
<div style="left:940px;top:959px;width:8px;height:1px;background:#FFFFFF;"></div>
<div class="t" style="left:940.00px;top:643.69px;font-size:11px;line-height:11px;color:#FFFFFF;width:8px;overflow:hidden">M</div>
<div class="t" style="left:940.00px;top:727.19px;font-size:11px;line-height:11px;color:#000;width:8px;overflow:hidden">01</div>
<div class="t" style="left:941.00px;top:740.69px;font-size:11px;line-height:11px;color:#404040;">&lt;</div>
<div class="t" style="left:940.00px;top:965.69px;font-size:11px;line-height:11px;color:#FFFFFF;width:8px;overflow:hidden">3:</div>
<div style="left:940px;top:980px;width:8px;height:16px;background:#FFFFFF;"></div>
<div style="left:940px;top:996px;width:8px;height:10px;background:#C8D4E8;"></div>
<div style="left:940px;top:1006px;width:8px;height:15px;background:#F4F6FB;"></div>
<div style="left:945px;top:1007px;width:1px;height:14px;background:#808080;"></div>
<div style="left:940px;top:1021px;width:8px;height:8px;background:#E9EEFB;"></div>
<div style="left:8px;top:1033px;width:753px;height:1px;background:#FFFFFF;"></div>
<div class="t" style="left:12.00px;top:1041.35px;font-size:11.4px;line-height:11.4px;color:#000;letter-spacing:-0.305px;">MANAUSD PERP</div>
<div style="left:103px;top:1035px;width:1px;height:22px;background:#A8A8A8;"></div>
<div class="t" style="left:108.40px;top:1041.35px;font-size:11.4px;line-height:11.4px;color:#000;letter-spacing:-0.308px;">MANAUSDT PERP</div>
<div style="left:206px;top:1035px;width:1px;height:22px;background:#A8A8A8;"></div>
<div class="t" style="left:211.00px;top:1041.35px;font-size:11.4px;line-height:11.4px;color:#000;letter-spacing:-0.248px;">LUNAUSD</div>
<div style="left:267px;top:1035px;width:1px;height:22px;background:#A8A8A8;"></div>
<div class="t" style="left:271.90px;top:1041.35px;font-size:11.4px;line-height:11.4px;color:#000;letter-spacing:-0.906px;">_EOSBUSD</div>
<div style="left:330px;top:1035px;width:1px;height:22px;background:#A8A8A8;"></div>
<div class="t" style="left:335.40px;top:1041.35px;font-size:11.4px;line-height:11.4px;color:#000;letter-spacing:-0.371px;">_SOLBUSD DEMO 3t5I</div>
<div style="left:453px;top:1035px;width:1px;height:22px;background:#A8A8A8;"></div>
<div class="t" style="left:456.90px;top:1041.35px;font-size:11.4px;line-height:11.4px;color:#000;letter-spacing:-0.448px;">_XBTUSD DEMO</div>
<div style="left:545px;top:1035px;width:1px;height:22px;background:#A8A8A8;"></div>
<div class="t" style="left:550.00px;top:1041.35px;font-size:11.4px;line-height:11.4px;color:#000;letter-spacing:-0.646px;">_ETHBUSD</div>
<div style="left:610px;top:1035px;width:1px;height:22px;background:#A8A8A8;"></div>
<div class="t" style="left:613.80px;top:1041.35px;font-size:11.4px;line-height:11.4px;color:#000;letter-spacing:-0.621px;">_ETHBUSD</div>
<div style="left:673px;top:1035px;width:1px;height:22px;background:#A8A8A8;"></div>
<div class="t" style="left:678.30px;top:1041.35px;font-size:11.4px;line-height:11.4px;color:#000;letter-spacing:-0.465px;">_XBTUSD DEMO</div>
<div style="left:766px;top:1035px;width:1px;height:22px;background:#A8A8A8;"></div>
<div class="t" style="left:770.80px;top:1041.35px;font-size:11.4px;line-height:11.4px;color:#000;letter-spacing:-0.351px;">*BTCUSD_PERP.2tr</div>
<div style="left:872px;top:1035px;width:1px;height:22px;background:#A8A8A8;"></div>
<div class="t" style="left:876.70px;top:1041.35px;font-size:11.4px;line-height:11.4px;color:#000;letter-spacing:-0.419px;">_ADAUSD.PERP.2T</div>
<div style="left:978px;top:1035px;width:1px;height:22px;background:#A8A8A8;"></div>
<div class="t" style="left:982.00px;top:1041.35px;font-size:11.4px;line-height:11.4px;color:#000;letter-spacing:-0.281px;">DOTUSD_PERP.studies</div>
<div style="left:1104px;top:1035px;width:1px;height:22px;background:#A8A8A8;"></div>
<div style="left:1104px;top:1035px;width:61px;height:22px;background:#3399FF;"></div>
<div class="t" style="left:1107.80px;top:1041.35px;font-size:11.4px;line-height:11.4px;color:#FFFFFF;letter-spacing:-0.659px;">_ES DEMO</div>
<div style="left:1165px;top:1035px;width:1px;height:22px;background:#A8A8A8;"></div>
<div class="t" style="left:1169.80px;top:1041.35px;font-size:11.4px;line-height:11.4px;color:#000;letter-spacing:-0.672px;">_ES DEMO</div>
<div style="left:1228px;top:1035px;width:1px;height:22px;background:#A8A8A8;"></div>
<div class="t" style="left:1231.80px;top:1041.35px;font-size:11.4px;line-height:11.4px;color:#000;letter-spacing:-0.659px;">_ES DEMO</div>
<div style="left:1289px;top:1035px;width:1px;height:22px;background:#A8A8A8;"></div>
<div class="t" style="left:1294.00px;top:1041.35px;font-size:11.4px;line-height:11.4px;color:#000;letter-spacing:-0.369px;">*BTCUSD_PERP.2tr</div>
<div style="left:1396px;top:1035px;width:1px;height:22px;background:#A8A8A8;"></div>
<div class="t" style="left:1400.00px;top:1041.35px;font-size:11.4px;line-height:11.4px;color:#000;letter-spacing:-0.357px;">*BTCUSD_PERP.2tr</div>
<div style="left:1501px;top:1035px;width:1px;height:22px;background:#A8A8A8;"></div>
<div class="t" style="left:1506.00px;top:1041.35px;font-size:11.4px;line-height:11.4px;color:#000;letter-spacing:-0.351px;">*BTCUSD_PERP.2tr</div>
<div style="left:1608px;top:1035px;width:1px;height:22px;background:#A8A8A8;"></div>
<div class="t" style="left:1612.00px;top:1041.35px;font-size:11.4px;line-height:11.4px;color:#000;letter-spacing:-0.262px;">LUNAUSD</div>
<div style="left:1668px;top:1035px;width:1px;height:22px;background:#A8A8A8;"></div>
<div class="t" style="left:1672.80px;top:1041.35px;font-size:11.4px;line-height:11.4px;color:#000;letter-spacing:-0.338px;">*BTCUSD_PERP.2tr</div>
<div style="left:1774px;top:1035px;width:1px;height:22px;background:#A8A8A8;"></div>
<div class="t" style="left:1778.80px;top:1041.35px;font-size:11.4px;line-height:11.4px;color:#000;letter-spacing:-0.319px;">*BTCUSD_PERP.2tr</div>
<div style="left:1880px;top:1035px;width:1px;height:22px;background:#A8A8A8;"></div>
<div style="left:1896px;top:1035px;width:1px;height:22px;background:#C8C8C8;"></div>
<div style="left:1911px;top:1035px;width:1px;height:22px;background:#8C8C8C;"></div>
<div style="left:948px;top:1033px;width:980px;height:1px;background:#FFFFFF;"></div>
<div class="t" style="left:1900.00px;top:1040.84px;font-size:12px;line-height:12px;color:#000;">&lt;</div>
<div class="t" style="left:1915.00px;top:1040.84px;font-size:12px;line-height:12px;color:#000;">&gt;</div>
<div style="left:141px;top:1058px;width:160px;height:8px;background:#9EDCF0;"></div>
<div style="left:141px;top:1058px;width:1px;height:8px;background:#3C5A6A;"></div>
<div style="left:300px;top:1058px;width:1px;height:8px;background:#3C5A6A;"></div>
<div style="left:141px;top:1058px;width:160px;height:1px;background:#3C5A6A;"></div>
<div style="left:303px;top:1058px;width:319px;height:8px;background:#7AD0EE;"></div>
<div style="left:303px;top:1058px;width:1px;height:8px;background:#3C5A6A;"></div>
<div style="left:462px;top:1058px;width:1px;height:8px;background:#3C5A6A;"></div>
<div style="left:622px;top:1058px;width:1px;height:8px;background:#4A8AA0;"></div>
<div style="left:0px;top:1051px;width:113px;height:15px;background:#000;"></div>
<div class="t" style="left:1.00px;top:1052.34px;font-size:12px;line-height:12px;color:#FFFFFF;letter-spacing:-0.019px;">www.sierrachart.com</div>
</body></html>
